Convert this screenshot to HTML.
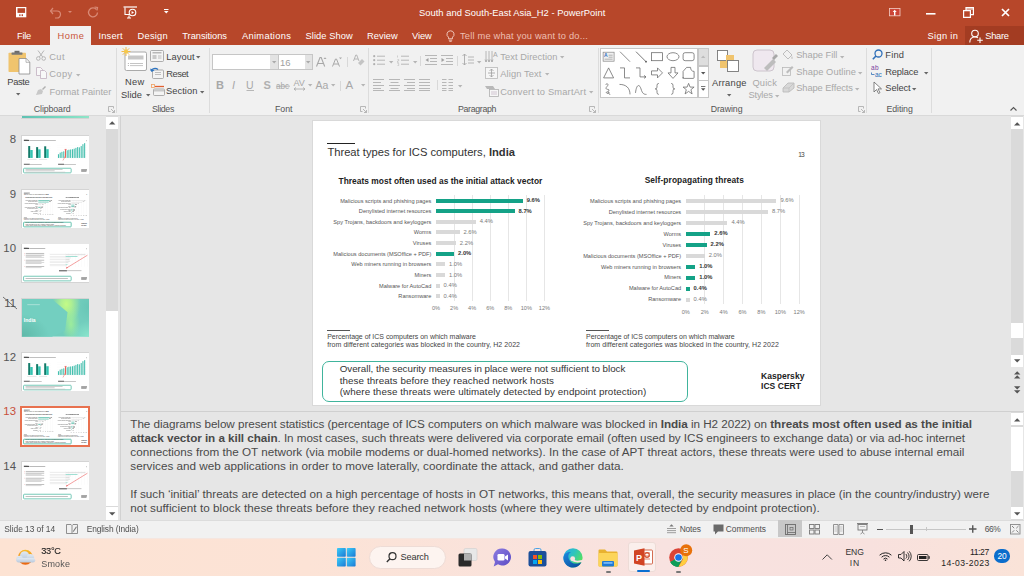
<!DOCTYPE html>
<html><head><meta charset="utf-8">
<style>
*{margin:0;padding:0;box-sizing:border-box}
html,body{width:1024px;height:576px;overflow:hidden;background:#e6e6e6;font-family:"Liberation Sans",sans-serif}
.a{position:absolute;white-space:nowrap}
svg.a{overflow:visible}
</style></head><body>
<div class="a" style="left:0px;top:0px;width:1024px;height:45px;background:#b7472a;"></div>
<svg class="a" style="left:15.8px;top:6.7px;" width="11" height="11" viewBox="0 0 11 11"><rect x="0" y="0" width="10.3" height="10.3" fill="#fff"/><rect x="1.5" y="1.2" width="7.6" height="4.7" fill="#b7472a"/><rect x="3.2" y="7.3" width="1.3" height="1.8" fill="#b7472a"/><rect x="5.6" y="7.3" width="1.4" height="1.8" fill="#b7472a"/></svg>
<svg class="a" style="left:49px;top:6px;" width="13" height="13" viewBox="0 0 13 13"><path d="M4 2 L1.5 5 L4 8" fill="none" stroke="#d98a76" stroke-width="1.2"/><path d="M1.8 5 H8 a3.5 3.5 0 0 1 0 7 H6" fill="none" stroke="#d98a76" stroke-width="1.2"/></svg>
<svg class="a" style="left:68px;top:10px;" width="5" height="4" viewBox="0 0 5 4"><path d="M0 1h4l-2 2z" fill="#d98a76"/></svg>
<svg class="a" style="left:87px;top:6px;" width="12" height="12" viewBox="0 0 12 12"><path d="M9.5 3.5 A4.5 4.5 0 1 0 10.5 6.5" fill="none" stroke="#d98a76" stroke-width="1.3"/><path d="M7.5 1 L10.5 1.5 L10 4.5" fill="none" stroke="#d98a76" stroke-width="1.2"/></svg>
<svg class="a" style="left:123px;top:6px;" width="15" height="13" viewBox="0 0 15 13"><path d="M0.5 1H14" stroke="#fff" stroke-width="1.2"/><path d="M2 1.5V8.5H7" fill="none" stroke="#fff" stroke-width="1.1"/><circle cx="9.5" cy="6.5" r="3.3" fill="none" stroke="#fff" stroke-width="1.1"/><path d="M8.6 4.9l2.4 1.6l-2.4 1.6z" fill="#fff"/><path d="M6 9.5v2M4 12h4" stroke="#fff" stroke-width="1.1"/></svg>
<svg class="a" style="left:164px;top:9px;" width="5" height="5" viewBox="0 0 5 5"><path d="M0 0.5h4.5" stroke="#fff" stroke-width="1"/><path d="M0 2h4.5l-2.25 2.5z" fill="#fff"/></svg>
<div class="a" style="left:419.00px;top:8.34px;font-size:9.4px;line-height:1;color:#fff;font-weight:normal;letter-spacing:0.019px;">South and South-East Asia_H2 - PowerPoint</div>
<svg class="a" style="left:889.4px;top:7.9px;" width="12" height="9" viewBox="0 0 12 9"><rect x="0.4" y="0.4" width="10.6" height="7.4" fill="#cc4436" stroke="#f2cfc8" stroke-width="0.8"/><path d="M5.7 1.7l2 2.2H6.4v3.5H5V3.9H3.7z" fill="#fff"/></svg>
<svg class="a" style="left:926px;top:13px;" width="10" height="2" viewBox="0 0 10 2"><rect width="9.5" height="1.6" fill="#fff"/></svg>
<svg class="a" style="left:963px;top:7px;" width="11" height="11" viewBox="0 0 11 11"><path d="M0.6 3.6h6.8v6.8H0.6z" fill="none" stroke="#fff" stroke-width="1.2"/><path d="M3 3.4V0.6h7.4v7H7.6" fill="none" stroke="#fff" stroke-width="1.2"/><path d="M3 2h7.4" stroke="#fff" stroke-width="1"/></svg>
<svg class="a" style="left:1001px;top:8px;" width="9" height="9" viewBox="0 0 9 9"><path d="M1 1L8 8M8 1L1 8" stroke="#fff" stroke-width="1.7"/></svg>
<div class="a" style="left:50px;top:26px;width:41px;height:20px;background:#f1f1f1;"></div>
<div class="a" style="left:16.90px;top:31.53px;font-size:9.3px;line-height:1;color:#fff;font-weight:normal;letter-spacing:-0.193px;">File</div>
<div class="a" style="left:98.40px;top:31.53px;font-size:9.3px;line-height:1;color:#fff;font-weight:normal;letter-spacing:0.210px;">Insert</div>
<div class="a" style="left:137.60px;top:31.53px;font-size:9.3px;line-height:1;color:#fff;font-weight:normal;letter-spacing:0.232px;">Design</div>
<div class="a" style="left:182.30px;top:31.53px;font-size:9.3px;line-height:1;color:#fff;font-weight:normal;letter-spacing:-0.042px;">Transitions</div>
<div class="a" style="left:242.00px;top:31.53px;font-size:9.3px;line-height:1;color:#fff;font-weight:normal;letter-spacing:0.312px;">Animations</div>
<div class="a" style="left:305.60px;top:31.53px;font-size:9.3px;line-height:1;color:#fff;font-weight:normal;letter-spacing:0.054px;">Slide Show</div>
<div class="a" style="left:367.00px;top:31.53px;font-size:9.3px;line-height:1;color:#fff;font-weight:normal;letter-spacing:0.063px;">Review</div>
<div class="a" style="left:412.00px;top:31.53px;font-size:9.3px;line-height:1;color:#fff;font-weight:normal;letter-spacing:-0.061px;">View</div>
<div class="a" style="left:57.40px;top:31.53px;font-size:9.3px;line-height:1;color:#c9543a;font-weight:normal;letter-spacing:0.600px;">Home</div>
<svg class="a" style="left:446px;top:30px;" width="9" height="12" viewBox="0 0 9 12"><path d="M4.5 0.8a3.5 3.5 0 0 0-2 6.4v1.6h4v-1.6a3.5 3.5 0 0 0-2-6.4z" fill="none" stroke="#f0c8bd" stroke-width="1"/><path d="M2.8 10.2h3.4M3.3 11.4h2.4" stroke="#f0c8bd" stroke-width="0.9"/></svg>
<div class="a" style="left:460.00px;top:31.53px;font-size:9.3px;line-height:1;color:#eebfb2;font-weight:normal;letter-spacing:0.184px;">Tell me what you want to do...</div>
<div class="a" style="left:927.60px;top:31.53px;font-size:9.3px;line-height:1;color:#fff;font-weight:normal;letter-spacing:0.296px;">Sign in</div>
<div class="a" style="left:965px;top:26px;width:59px;height:19px;background:#a33c22;"></div>
<svg class="a" style="left:968.5px;top:28.5px;" width="15" height="15" viewBox="0 0 15 15"><circle cx="6" cy="4.5" r="3.3" fill="none" stroke="#fff" stroke-width="1.1"/><path d="M0.8 13.5c0-3.5 2.3-5.5 5.2-5.5c1.2 0 2.2 0.3 3 0.9" fill="none" stroke="#fff" stroke-width="1.1"/><path d="M11 8.5v5.5M8.2 11.2h5.6" stroke="#fff" stroke-width="1.1"/></svg>
<div class="a" style="left:985.30px;top:31.53px;font-size:9.3px;line-height:1;color:#fff;font-weight:normal;letter-spacing:-0.277px;">Share</div>
<div class="a" style="left:0px;top:45px;width:1024px;height:70px;background:#f1f1f1;"></div>
<div class="a" style="left:0px;top:115px;width:1024px;height:1px;background:#d9d9d9;"></div>
<div class="a" style="left:116px;top:48px;width:1px;height:65px;background:#dcdcdc;"></div>
<div class="a" style="left:209px;top:48px;width:1px;height:65px;background:#dcdcdc;"></div>
<div class="a" style="left:368px;top:48px;width:1px;height:65px;background:#dcdcdc;"></div>
<div class="a" style="left:598px;top:48px;width:1px;height:65px;background:#dcdcdc;"></div>
<div class="a" style="left:866px;top:48px;width:1px;height:65px;background:#dcdcdc;"></div>
<div class="a" style="left:931px;top:48px;width:1px;height:65px;background:#dcdcdc;"></div>
<svg class="a" style="left:8px;top:50px;" width="24" height="25" viewBox="0 0 24 25"><rect x="0.5" y="2.8" width="17.5" height="19.2" rx="0.8" fill="#f0c46e"/><path d="M6.5 0.8h5v2.2h-5z" fill="#6a6a6a"/><rect x="3.5" y="2.5" width="11" height="2.2" rx="0.6" fill="#777"/><path d="M11 8.5h7.2l3.6 3.6v11.9h-10.8z" fill="#fff" stroke="#8a8a8a" stroke-width="0.8"/><path d="M18 8.5v3.8h3.8" fill="none" stroke="#8a8a8a" stroke-width="0.6"/></svg>
<div class="a" style="left:7.30px;top:77.53px;font-size:9.3px;line-height:1;color:#444444;font-weight:normal;letter-spacing:-0.343px;">Paste</div>
<svg class="a" style="left:15.5px;top:93px;" width="5" height="3" viewBox="0 0 5 3"><path d="M0 0h4.4l-2.2 2.6z" fill="#666"/></svg>
<svg class="a" style="left:36px;top:50px;" width="10" height="11" viewBox="0 0 10 11"><circle cx="2.3" cy="8.5" r="1.8" fill="none" stroke="#b0b0b0" stroke-width="0.9"/><circle cx="7.7" cy="8.5" r="1.8" fill="none" stroke="#b0b0b0" stroke-width="0.9"/><path d="M3.3 7L8 0.5M6.7 7L2 0.5" stroke="#b0b0b0" stroke-width="0.9"/></svg>
<div class="a" style="left:49.20px;top:52.93px;font-size:9.3px;line-height:1;color:#a8a8a8;font-weight:normal;letter-spacing:0.416px;">Cut</div>
<svg class="a" style="left:36px;top:67px;" width="11" height="12" viewBox="0 0 11 12"><path d="M0.5 0.5h4l2 2v6h-6z" fill="#f8f8f8" stroke="#c2b0c0" stroke-width="0.8"/><path d="M4.5 3.5h4l2 2v6h-6z" fill="#f8f8f8" stroke="#c2b0c0" stroke-width="0.8"/></svg>
<div class="a" style="left:49.20px;top:69.93px;font-size:9.3px;line-height:1;color:#a8a8a8;font-weight:normal;letter-spacing:0.432px;">Copy</div>
<svg class="a" style="left:76px;top:74px;" width="5" height="3" viewBox="0 0 5 3"><path d="M0 0h4.4l-2.2 2.6z" fill="#b5b5b5"/></svg>
<svg class="a" style="left:35px;top:85px;" width="12" height="11" viewBox="0 0 12 11"><path d="M7 4l3-3l1 1l-3 3z" fill="#b0b0b0"/><path d="M1 10l2-5l3-1l2 2l-1 3z" fill="#c8c8c8"/></svg>
<div class="a" style="left:49.50px;top:87.53px;font-size:9.3px;line-height:1;color:#a8a8a8;font-weight:normal;letter-spacing:0.024px;">Format Painter</div>
<div class="a" style="left:33.80px;top:104.75px;font-size:8.8px;line-height:1;color:#555;font-weight:normal;letter-spacing:-0.107px;">Clipboard</div>
<svg class="a" style="left:108px;top:106px;" width="7" height="7" viewBox="0 0 7 7"><path d="M0.5 0.5h5v2M0.5 0.5v5h2" fill="none" stroke="#a8a8a8" stroke-width="0.8"/><path d="M3 3l3.5 3.5M6.5 4v2.5H4" fill="none" stroke="#a8a8a8" stroke-width="0.8"/></svg>
<svg class="a" style="left:121px;top:46px;" width="27" height="26" viewBox="0 0 27 26"><rect x="4" y="6" width="21.5" height="18.5" rx="1.5" fill="#fff" stroke="#a0a0a0" stroke-width="0.9"/><rect x="7" y="9.5" width="15.5" height="4" fill="#c8c8c8"/><path d="M9 17.5h13M9 19.6h13" stroke="#bdbdbd" stroke-width="0.9"/><circle cx="7.3" cy="17.5" r="0.5" fill="#999"/><circle cx="7.3" cy="19.6" r="0.5" fill="#999"/><g stroke="#f2b43a" stroke-width="0.9"><path d="M5 1v9M0.5 5.5h9M1.8 2.3l6.4 6.4M8.2 2.3l-6.4 6.4"/></g><circle cx="5" cy="5.5" r="2" fill="#f6c94a"/></svg>
<div class="a" style="left:125.00px;top:78.13px;font-size:9.3px;line-height:1;color:#444444;font-weight:normal;letter-spacing:0.351px;">New</div>
<div class="a" style="left:121.00px;top:90.63px;font-size:9.3px;line-height:1;color:#444444;font-weight:normal;letter-spacing:0.082px;">Slide</div>
<svg class="a" style="left:146px;top:94px;" width="5" height="3" viewBox="0 0 5 3"><path d="M0 0h4.4l-2.2 2.6z" fill="#666"/></svg>
<svg class="a" style="left:150px;top:50px;" width="14" height="12" viewBox="0 0 14 12"><rect x="0.5" y="0.5" width="13" height="11" rx="1" fill="#f4f4f4" stroke="#9a9a9a" stroke-width="0.8"/><rect x="2.5" y="2" width="9" height="1.5" fill="#b8b8b8"/><rect x="2.5" y="5" width="4" height="4" fill="#c8c8c8"/><path d="M8 6h3.5M8 8h3.5" stroke="#b0b0b0" stroke-width="0.8"/></svg>
<div class="a" style="left:166.30px;top:52.93px;font-size:9.3px;line-height:1;color:#444444;font-weight:normal;letter-spacing:0.077px;">Layout</div>
<svg class="a" style="left:196px;top:56px;" width="5" height="3" viewBox="0 0 5 3"><path d="M0 0h4.4l-2.2 2.6z" fill="#666"/></svg>
<svg class="a" style="left:150px;top:67px;" width="14" height="12" viewBox="0 0 14 12"><rect x="2.5" y="3" width="11" height="8.5" rx="1" fill="#f4f4f4" stroke="#9a9a9a" stroke-width="0.8"/><path d="M5 5.5h6M5 7.5h6" stroke="#b0b0b0" stroke-width="0.8"/><path d="M1 4a4 3 0 0 1 7-1.5" fill="none" stroke="#2e74c0" stroke-width="1.3"/><path d="M0 1.5l1.5 3.5l3-1.5z" fill="#2e74c0"/></svg>
<div class="a" style="left:166.30px;top:69.93px;font-size:9.3px;line-height:1;color:#444444;font-weight:normal;letter-spacing:-0.472px;">Reset</div>
<svg class="a" style="left:151px;top:84px;" width="14" height="12" viewBox="0 0 14 12"><rect x="0.5" y="0.5" width="3" height="3" fill="none" stroke="#f0a060" stroke-width="0.8"/><path d="M4 2.5h9" stroke="#e06030" stroke-width="1.3"/><rect x="2.5" y="5" width="11" height="6.5" rx="1" fill="#f4f4f4" stroke="#9a9a9a" stroke-width="0.8"/><rect x="3" y="5.5" width="10" height="2" fill="#c8c8c8"/></svg>
<div class="a" style="left:166.00px;top:86.93px;font-size:9.3px;line-height:1;color:#444444;font-weight:normal;letter-spacing:0.048px;">Section</div>
<svg class="a" style="left:200px;top:91px;" width="5" height="3" viewBox="0 0 5 3"><path d="M0 0h4.4l-2.2 2.6z" fill="#666"/></svg>
<div class="a" style="left:152.00px;top:104.75px;font-size:8.8px;line-height:1;color:#555;font-weight:normal;letter-spacing:-0.332px;">Slides</div>
<div class="a" style="left:212px;top:53.5px;width:66px;height:16.5px;background:#fff;border:1px solid #c6c6c6"></div>
<div class="a" style="left:270px;top:54.5px;width:7.5px;height:14.5px;background:#e3e3e3;"></div>
<svg class="a" style="left:271.5px;top:61px;" width="5" height="3" viewBox="0 0 5 3"><path d="M0 0h4.4l-2.2 2.6z" fill="#aaa"/></svg>
<div class="a" style="left:278px;top:53.5px;width:35px;height:16.5px;background:#fff;border:1px solid #c6c6c6"></div>
<div class="a" style="left:304.5px;top:54.5px;width:7.5px;height:14.5px;background:#e3e3e3;"></div>
<svg class="a" style="left:306px;top:61px;" width="5" height="3" viewBox="0 0 5 3"><path d="M0 0h4.4l-2.2 2.6z" fill="#aaa"/></svg>
<div class="a" style="left:280.00px;top:58.26px;font-size:9.5px;line-height:1;color:#a0a0a0;font-weight:normal;">16</div>
<svg class="a" style="left:316px;top:56px;" width="11" height="11" viewBox="0 0 11 11"><path d="M0.5 10.5L4 1.5h1.2l3.5 9M2 7.5h5" fill="none" stroke="#a8a8a8" stroke-width="1.1"/><path d="M7.5 3l1.5-1.8l1.5 1.8z" fill="#a8a8a8"/></svg>
<svg class="a" style="left:332px;top:57px;" width="10" height="10" viewBox="0 0 10 10"><path d="M0.5 9.5L3.5 2h1l3 7.5M1.8 7h4.5" fill="none" stroke="#a8a8a8" stroke-width="1"/><path d="M7 0.5h3l-1.5 1.8z" fill="#a8a8a8"/></svg>
<div class="a" style="left:347px;top:57px;width:1px;height:10px;background:#d8d8d8;"></div>
<svg class="a" style="left:353px;top:54px;" width="12" height="12" viewBox="0 0 12 12"><path d="M0.5 7L2.8 1h0.9l2.3 6M1.3 5h3.7" fill="none" stroke="#b0b0b0" stroke-width="0.9"/><path d="M5 9l4-4l2.5 2.5l-4 4z" fill="#c4c4c4"/></svg>
<svg class="a" style="left:215px;top:78.5px;" width="60" height="12" viewBox="0 0 60 12"><text x="1" y="10" font-family="Liberation Sans" font-weight="bold" font-size="11" fill="#a8a8a8">B</text><text x="17" y="10" font-family="Liberation Sans" font-style="italic" font-size="11" fill="#a8a8a8">I</text><text x="31" y="9.5" font-family="Liberation Sans" font-size="10.5" fill="#a8a8a8">U</text><path d="M31.5 11.5h7.5" stroke="#a8a8a8" stroke-width="0.8"/><text x="48.5" y="10" font-family="Liberation Sans" font-weight="bold" font-size="11" fill="#b0b0b0">S</text></svg>
<svg class="a" style="left:276px;top:80.5px;" width="16" height="10" viewBox="0 0 16 10"><text x="0" y="8" font-family="Liberation Sans" font-size="8.2" fill="#a8a8a8">abc</text><path d="M0 5.2h14" stroke="#a8a8a8" stroke-width="0.8"/></svg>
<svg class="a" style="left:293px;top:77.5px;" width="14" height="14" viewBox="0 0 14 14"><text x="0.5" y="8" font-family="Liberation Sans" font-size="9" fill="#a8a8a8">AV</text><path d="M1 11h11M1 11l2-1.5M1 11l2 1.5M12 11l-2-1.5M12 11l-2 1.5" stroke="#a8a8a8" stroke-width="0.8" fill="none"/></svg>
<svg class="a" style="left:308px;top:83.5px;" width="5" height="3" viewBox="0 0 5 3"><path d="M0 0h4.4l-2.2 2.6z" fill="#b5b5b5"/></svg>
<div class="a" style="left:315.50px;top:79.91px;font-size:10.5px;line-height:1;color:#a8a8a8;font-weight:normal;">Aa</div>
<svg class="a" style="left:331px;top:83.5px;" width="5" height="3" viewBox="0 0 5 3"><path d="M0 0h4.4l-2.2 2.6z" fill="#b5b5b5"/></svg>
<div class="a" style="left:340px;top:80.5px;width:1px;height:10px;background:#d8d8d8;"></div>
<div class="a" style="left:345.50px;top:80.07px;font-size:11.5px;line-height:1;color:#a8a8a8;font-weight:normal;">A</div>
<svg class="a" style="left:361px;top:83.5px;" width="5" height="3" viewBox="0 0 5 3"><path d="M0 0h4.4l-2.2 2.6z" fill="#b5b5b5"/></svg>
<div class="a" style="left:275.00px;top:104.75px;font-size:8.8px;line-height:1;color:#555;font-weight:normal;letter-spacing:-0.067px;">Font</div>
<svg class="a" style="left:360px;top:106px;" width="7" height="7" viewBox="0 0 7 7"><path d="M0.5 0.5h5v2M0.5 0.5v5h2" fill="none" stroke="#a8a8a8" stroke-width="0.8"/><path d="M3 3l3.5 3.5M6.5 4v2.5H4" fill="none" stroke="#a8a8a8" stroke-width="0.8"/></svg>
<svg class="a" style="left:373px;top:55px;" width="13" height="11" viewBox="0 0 13 11"><circle cx="1.2" cy="1.2" r="1.1" fill="#b0b0b0"/><circle cx="1.2" cy="5.2" r="1.1" fill="#b0b0b0"/><circle cx="1.2" cy="9.2" r="1.1" fill="#b0b0b0"/><path d="M4 1.2h8M4 5.2h8M4 9.2h8" stroke="#b0b0b0" stroke-width="0.9"/></svg>
<svg class="a" style="left:389px;top:61px;" width="5" height="3" viewBox="0 0 5 3"><path d="M0 0h4.4l-2.2 2.6z" fill="#b5b5b5"/></svg>
<svg class="a" style="left:397px;top:55px;" width="13" height="11" viewBox="0 0 13 11"><path d="M0.5 0.5v2M0.5 4.5h1.2v1.5h-1.2v1.5h1.2M0.5 8.5h1.2v2h-1.2" stroke="#b8b8b8" stroke-width="0.6" fill="none"/><path d="M4 1.2h8M4 5.2h8M4 9.2h8" stroke="#b0b0b0" stroke-width="0.9"/></svg>
<svg class="a" style="left:413px;top:61px;" width="5" height="3" viewBox="0 0 5 3"><path d="M0 0h4.4l-2.2 2.6z" fill="#b5b5b5"/></svg>
<div class="a" style="left:420px;top:56px;width:1px;height:10px;background:#d8d8d8;"></div>
<svg class="a" style="left:425px;top:55px;" width="12" height="11" viewBox="0 0 12 11"><path d="M0 0.5h12M5 3.5h7M5 6.5h7M0 9.5h12" stroke="#b0b0b0" stroke-width="0.9"/><path d="M3.5 3l-3 2l3 2z" fill="#a0a0a0"/></svg>
<svg class="a" style="left:441px;top:55px;" width="12" height="11" viewBox="0 0 12 11"><path d="M0 0.5h12M5 3.5h7M5 6.5h7M0 9.5h12" stroke="#b0b0b0" stroke-width="0.9"/><path d="M0.5 3l3 2l-3 2z" fill="#a0a0a0"/></svg>
<div class="a" style="left:457px;top:56px;width:1px;height:10px;background:#d8d8d8;"></div>
<svg class="a" style="left:462px;top:53px;" width="12" height="14" viewBox="0 0 12 14"><path d="M2.5 1v11M0.5 3l2-2l2 2M0.5 10l2 2l2-2" fill="none" stroke="#a8a8a8" stroke-width="0.9"/><path d="M6 4h6M6 7h6M6 10h6" stroke="#b0b0b0" stroke-width="0.9"/></svg>
<svg class="a" style="left:477px;top:61px;" width="5" height="3" viewBox="0 0 5 3"><path d="M0 0h4.4l-2.2 2.6z" fill="#b5b5b5"/></svg>
<svg class="a" style="left:373px;top:79px;" width="11" height="12" viewBox="0 0 11 12"><path d="M0 0.5h11M0 3.5h8M0 6.5h11M0 9.5h8M0 11.5h11" stroke="#b0b0b0" stroke-width="0.9"/></svg>
<svg class="a" style="left:389px;top:79px;" width="11" height="12" viewBox="0 0 11 12"><path d="M0 0.5h11M1.5 3.5h8M0 6.5h11M1.5 9.5h8M0 11.5h11" stroke="#b0b0b0" stroke-width="0.9"/></svg>
<svg class="a" style="left:404px;top:79px;" width="11" height="12" viewBox="0 0 11 12"><path d="M0 0.5h11M3 3.5h8M0 6.5h11M3 9.5h8M0 11.5h11" stroke="#b0b0b0" stroke-width="0.9"/></svg>
<svg class="a" style="left:419px;top:79px;" width="11" height="12" viewBox="0 0 11 12"><path d="M0 0.5h11M0 3.5h11M0 6.5h11M0 9.5h11M0 11.5h11" stroke="#b0b0b0" stroke-width="0.9"/></svg>
<div class="a" style="left:437px;top:80px;width:1px;height:10px;background:#d8d8d8;"></div>
<svg class="a" style="left:442px;top:79px;" width="11" height="12" viewBox="0 0 11 12"><path d="M0 0.5h4.5M0 3.5h4.5M0 6.5h4.5M0 9.5h4.5M0 11.5h4.5M6.5 0.5h4.5M6.5 3.5h4.5M6.5 6.5h4.5M6.5 9.5h4.5M6.5 11.5h4.5" stroke="#b0b0b0" stroke-width="0.9"/></svg>
<svg class="a" style="left:458px;top:85px;" width="5" height="3" viewBox="0 0 5 3"><path d="M0 0h4.4l-2.2 2.6z" fill="#b5b5b5"/></svg>
<svg class="a" style="left:485px;top:50px;" width="14" height="13" viewBox="0 0 14 13"><path d="M1 1v11M4 1v11M7 1v11" stroke="#b0b0b0" stroke-width="0.9"/><path d="M0 9.5l1 2.5l1-2.5M3 9.5l1 2.5l1-2.5M6 9.5l1 2.5l1-2.5" fill="none" stroke="#a0a0a0" stroke-width="0.7"/><text x="8" y="7" font-family="Liberation Sans" font-size="7" fill="#a8a8a8">A</text></svg>
<div class="a" style="left:500.20px;top:52.93px;font-size:9.3px;line-height:1;color:#a8a8a8;font-weight:normal;letter-spacing:0.076px;">Text Direction</div>
<svg class="a" style="left:560px;top:56px;" width="5" height="3" viewBox="0 0 5 3"><path d="M0 0h4.4l-2.2 2.6z" fill="#b5b5b5"/></svg>
<svg class="a" style="left:485px;top:67px;" width="14" height="13" viewBox="0 0 14 13"><rect x="0.5" y="0.5" width="12" height="11" fill="#f6f6f6" stroke="#b8b8b8" stroke-width="0.8"/><path d="M6.5 2v8M4.5 4l2-2l2 2M4.5 8l2 2l2-2M3 6h7" fill="none" stroke="#a0a0a0" stroke-width="0.8"/></svg>
<div class="a" style="left:500.20px;top:69.93px;font-size:9.3px;line-height:1;color:#a8a8a8;font-weight:normal;letter-spacing:0.122px;">Align Text</div>
<svg class="a" style="left:545px;top:73px;" width="5" height="3" viewBox="0 0 5 3"><path d="M0 0h4.4l-2.2 2.6z" fill="#b5b5b5"/></svg>
<svg class="a" style="left:485px;top:85px;" width="14" height="12" viewBox="0 0 14 12"><path d="M0 1h8l2 3H2z" fill="#b8b8b8"/><rect x="4.5" y="4.5" width="9" height="7" fill="#f6f6f6" stroke="#b0b0b0" stroke-width="0.8"/><path d="M6 7h6M6 9h6" stroke="#c0b0c0" stroke-width="0.7"/></svg>
<div class="a" style="left:500.20px;top:87.73px;font-size:9.3px;line-height:1;color:#a8a8a8;font-weight:normal;letter-spacing:0.203px;">Convert to SmartArt</div>
<svg class="a" style="left:589px;top:91px;" width="5" height="3" viewBox="0 0 5 3"><path d="M0 0h4.4l-2.2 2.6z" fill="#b5b5b5"/></svg>
<div class="a" style="left:458.00px;top:104.75px;font-size:8.8px;line-height:1;color:#555;font-weight:normal;letter-spacing:-0.323px;">Paragraph</div>
<svg class="a" style="left:589px;top:106px;" width="7" height="7" viewBox="0 0 7 7"><path d="M0.5 0.5h5v2M0.5 0.5v5h2" fill="none" stroke="#a8a8a8" stroke-width="0.8"/><path d="M3 3l3.5 3.5M6.5 4v2.5H4" fill="none" stroke="#a8a8a8" stroke-width="0.8"/></svg>
<div class="a" style="left:600px;top:48px;width:98px;height:50px;background:#fff;border:1px solid #c6c6c6"></div>
<div class="a" style="left:698px;top:48px;width:11px;height:18px;background:#dedede;border:1px solid #c6c6c6"></div>
<div class="a" style="left:698px;top:65.5px;width:11px;height:15px;background:#fff;border:1px solid #c6c6c6"></div>
<div class="a" style="left:698px;top:80px;width:11px;height:18px;background:#fff;border:1px solid #c6c6c6"></div>
<svg class="a" style="left:701px;top:55px;" width="5" height="4" viewBox="0 0 5 4"><path d="M0 3h4.4l-2.2-2.6z" fill="#bbb"/></svg>
<svg class="a" style="left:701px;top:72px;" width="5" height="3" viewBox="0 0 5 3"><path d="M0 0h4.4l-2.2 2.6z" fill="#555"/></svg>
<svg class="a" style="left:701px;top:86px;" width="5" height="6" viewBox="0 0 5 6"><path d="M0 0.5h4.4" stroke="#555" stroke-width="0.8"/><path d="M0 2.2h4.4l-2.2 2.6z" fill="#555"/></svg>
<svg class="a" style="left:600px;top:48px;" width="98" height="50" viewBox="0 0 98 50"><g transform="translate(8.600000000000023,8.700000000000003)"><rect x="-5.5" y="-4.5" width="11" height="9" fill="#f0f0f0" stroke="#888" stroke-width="0.7"/><text x="-4.5" y="0.5" font-family="Liberation Sans" font-weight="bold" font-size="5" fill="#2e6fc0">A</text><path d="M-4 2.5h8M0 -1.5h4M0 0.5h4" stroke="#888" stroke-width="0.6"/></g><g transform="translate(25,8.700000000000003)"><path d="M-5 -5L5 5" stroke="#666" stroke-width="0.75"/></g><g transform="translate(41,8.700000000000003)"><path d="M-5 -5L5 5" stroke="#555" stroke-width="0.8"/><circle cx="5" cy="5" r="0.9" fill="#555"/></g><g transform="translate(57,8.700000000000003)"><rect x="-5.5" y="-4" width="11" height="8" fill="none" stroke="#666" stroke-width="0.75"/></g><g transform="translate(73,8.700000000000003)"><ellipse cx="0" cy="0" rx="6" ry="4" fill="none" stroke="#666" stroke-width="0.75"/></g><g transform="translate(88.60000000000002,8.700000000000003)"><rect x="-5.5" y="-4" width="11" height="8" rx="2" fill="none" stroke="#666" stroke-width="0.75"/></g><g transform="translate(8.600000000000023,24.900000000000006)"><path d="M-5 5L0 -5L5 5z" fill="none" stroke="#666" stroke-width="0.75"/></g><g transform="translate(25,24.900000000000006)"><path d="M-5 -5H-0.5V5H5" fill="none" stroke="#666" stroke-width="0.75"/></g><g transform="translate(41,24.900000000000006)"><path d="M-5 -5H-1V4H5M3 2.5l2 1.5l-2 1.5" fill="none" stroke="#666" stroke-width="0.75"/></g><g transform="translate(57,24.900000000000006)"><path d="M-5.5 -2H0.5V-5L5.5 0L0.5 5V2H-5.5z" fill="none" stroke="#666" stroke-width="0.75"/></g><g transform="translate(73,24.900000000000006)"><path d="M-2 -5.5H2V0H5L0 5.5L-5 0H-2z" fill="none" stroke="#666" stroke-width="0.75"/></g><g transform="translate(88.60000000000002,24.900000000000006)"><path d="M-5.5 5.5V-1.5L-2 -5.5H2C2 -3 3.2 -1.5 5.5 -1.5V4.5Q5.5 5.5 4.5 5.5H-4.5Q-5.5 5.5 -5.5 4.5z" fill="none" stroke="#666" stroke-width="0.75"/></g><g transform="translate(8.600000000000023,40.900000000000006)"><path d="M-3 -4C-1.5 -6.5 0.5 -4.5 -1.5 -2.5C-3.5 -0.5 -2.5 0.5 -0.5 0.5C1.5 0.8 0 3 -1.5 3C-3 3 -2 5 -0.5 4.5C1 4 0.5 2.5 -0.5 3.5L1.5 6" fill="none" stroke="#666" stroke-width="0.75"/></g><g transform="translate(25,40.900000000000006)"><path d="M-5.5 -4.5C1 -4.5 5 -1 5 5.5" fill="none" stroke="#666" stroke-width="0.75"/></g><g transform="translate(41,40.900000000000006)"><path d="M-5.5 4C-4.5 -5 -1.5 -5 0 0C1.5 5 3 5.5 5.5 5.5" fill="none" stroke="#666" stroke-width="0.75"/></g><g transform="translate(57,40.900000000000006)"><path d="M1.8 -5.5Q0 -5.5 0 -3.5V-1.8Q0 0 -1.8 0Q0 0 0 1.8V3.5Q0 5.5 1.8 5.5" fill="none" stroke="#666" stroke-width="0.75"/></g><g transform="translate(73,40.900000000000006)"><path d="M-1.8 -5.5Q0 -5.5 0 -3.5V-1.8Q0 0 1.8 0Q0 0 0 1.8V3.5Q0 5.5 -1.8 5.5" fill="none" stroke="#666" stroke-width="0.75"/></g><g transform="translate(88.60000000000002,40.900000000000006)"><path d="M0 -5.5L1.5 -1.8L5.5 -1.8L2.3 0.8L3.5 5L0 2.5L-3.5 5L-2.3 0.8L-5.5 -1.8L-1.5 -1.8z" fill="none" stroke="#666" stroke-width="0.75"/></g></svg>
<svg class="a" style="left:716px;top:49px;" width="26" height="24" viewBox="0 0 26 24"><rect x="1.5" y="1.5" width="10" height="10" fill="#fff" stroke="#777" stroke-width="0.9"/><rect x="10" y="6" width="8" height="6" fill="#f0c46e"/><rect x="4" y="12" width="8" height="7" fill="#f0c46e"/><rect x="11.5" y="11.5" width="11" height="11" fill="#fff" stroke="#777" stroke-width="0.9"/></svg>
<div class="a" style="left:712.00px;top:79.23px;font-size:9.3px;line-height:1;color:#444444;font-weight:normal;letter-spacing:0.238px;">Arrange</div>
<svg class="a" style="left:726.5px;top:94px;" width="5" height="3" viewBox="0 0 5 3"><path d="M0 0h4.4l-2.2 2.6z" fill="#666"/></svg>
<svg class="a" style="left:752px;top:49px;" width="27" height="26" viewBox="0 0 27 26"><rect x="1" y="1" width="21" height="21" rx="4" fill="#efe8ef" stroke="#c8c0c8" stroke-width="0.9"/><path d="M12 19l9-9l3 3l-9 9z" fill="#bdbdbd"/><path d="M24 5l2 2l-4 4l-2-2z" fill="#a8a8a8"/></svg>
<div class="a" style="left:752.50px;top:78.93px;font-size:9.3px;line-height:1;color:#a8a8a8;font-weight:normal;letter-spacing:0.134px;">Quick</div>
<div class="a" style="left:748.60px;top:91.33px;font-size:9.3px;line-height:1;color:#a8a8a8;font-weight:normal;letter-spacing:-0.223px;">Styles</div>
<svg class="a" style="left:775px;top:95px;" width="5" height="3" viewBox="0 0 5 3"><path d="M0 0h4.4l-2.2 2.6z" fill="#b5b5b5"/></svg>
<svg class="a" style="left:782px;top:48.5px;" width="12" height="11" viewBox="0 0 12 11"><path d="M1 5l4-4l5 5l-4 4z" fill="none" stroke="#b8b8b8" stroke-width="0.9"/><path d="M10 7c1 1.5 1 3 0 3c-1 0 -1 -1.5 0 -3z" fill="#c8c8c8"/></svg>
<div class="a" style="left:796.20px;top:51.23px;font-size:9.3px;line-height:1;color:#a8a8a8;font-weight:normal;letter-spacing:-0.027px;">Shape Fill</div>
<svg class="a" style="left:840px;top:55.5px;" width="5" height="3" viewBox="0 0 5 3"><path d="M0 0h4.4l-2.2 2.6z" fill="#b5b5b5"/></svg>
<svg class="a" style="left:782px;top:65px;" width="12" height="11" viewBox="0 0 12 11"><rect x="0.5" y="2.5" width="8" height="8" fill="none" stroke="#b8b8b8" stroke-width="0.8"/><path d="M4 7l6-6l1.5 1.5l-6 6z" fill="#bdbdbd"/></svg>
<div class="a" style="left:796.20px;top:67.73px;font-size:9.3px;line-height:1;color:#a8a8a8;font-weight:normal;letter-spacing:0.073px;">Shape Outline</div>
<svg class="a" style="left:858px;top:72px;" width="5" height="3" viewBox="0 0 5 3"><path d="M0 0h4.4l-2.2 2.6z" fill="#b5b5b5"/></svg>
<svg class="a" style="left:782px;top:81.5px;" width="13" height="11" viewBox="0 0 13 11"><path d="M1 6l5-5h6v5l-5 4H1z" fill="#d8d8d8" stroke="#b8b8b8" stroke-width="0.8"/><path d="M1 6h6l5-5M7 6v4" fill="none" stroke="#c0c0c0" stroke-width="0.8"/></svg>
<div class="a" style="left:796.20px;top:84.13px;font-size:9.3px;line-height:1;color:#a8a8a8;font-weight:normal;letter-spacing:-0.076px;">Shape Effects</div>
<svg class="a" style="left:855px;top:88px;" width="5" height="3" viewBox="0 0 5 3"><path d="M0 0h4.4l-2.2 2.6z" fill="#b5b5b5"/></svg>
<div class="a" style="left:710.70px;top:104.75px;font-size:8.8px;line-height:1;color:#555;font-weight:normal;letter-spacing:-0.061px;">Drawing</div>
<svg class="a" style="left:858px;top:106px;" width="7" height="7" viewBox="0 0 7 7"><path d="M0.5 0.5h5v2M0.5 0.5v5h2" fill="none" stroke="#a8a8a8" stroke-width="0.8"/><path d="M3 3l3.5 3.5M6.5 4v2.5H4" fill="none" stroke="#a8a8a8" stroke-width="0.8"/></svg>
<svg class="a" style="left:872px;top:48.5px;" width="11" height="11" viewBox="0 0 11 11"><circle cx="6.5" cy="4.5" r="3.5" fill="none" stroke="#2e6fb8" stroke-width="1.3"/><path d="M4 7L0.8 10.2" stroke="#2e6fb8" stroke-width="1.6"/></svg>
<div class="a" style="left:885.30px;top:51.23px;font-size:9.3px;line-height:1;color:#444444;font-weight:normal;letter-spacing:0.205px;">Find</div>
<svg class="a" style="left:871px;top:64px;" width="14" height="14" viewBox="0 0 14 14"><text x="0" y="6" font-family="Liberation Sans" font-size="6.5" fill="#7a3ea0">a</text><text x="4" y="6" font-family="Liberation Sans" font-size="6.5" fill="#7a3ea0">b</text><text x="4" y="12.5" font-family="Liberation Sans" font-size="6.5" fill="#2e6fb8">ac</text><path d="M0.5 8.5v2h3" fill="none" stroke="#2e6fb8" stroke-width="0.8"/></svg>
<div class="a" style="left:885.30px;top:67.73px;font-size:9.3px;line-height:1;color:#444444;font-weight:normal;letter-spacing:-0.185px;">Replace</div>
<svg class="a" style="left:924px;top:72px;" width="5" height="3" viewBox="0 0 5 3"><path d="M0 0h4.4l-2.2 2.6z" fill="#666"/></svg>
<svg class="a" style="left:873px;top:80.5px;" width="10" height="13" viewBox="0 0 10 13"><path d="M1 1v10l2.5-2.5l2 4l1.5-0.8l-2-3.8h3.5z" fill="#fff" stroke="#666" stroke-width="0.8"/></svg>
<div class="a" style="left:885.30px;top:84.13px;font-size:9.3px;line-height:1;color:#444444;font-weight:normal;letter-spacing:-0.108px;">Select</div>
<svg class="a" style="left:912px;top:88px;" width="5" height="3" viewBox="0 0 5 3"><path d="M0 0h4.4l-2.2 2.6z" fill="#666"/></svg>
<div class="a" style="left:886.50px;top:104.75px;font-size:8.8px;line-height:1;color:#555;font-weight:normal;letter-spacing:-0.100px;">Editing</div>
<svg class="a" style="left:1010px;top:106px;" width="7" height="5" viewBox="0 0 7 5"><path d="M0.5 4.5l3-3l3 3" fill="none" stroke="#555" stroke-width="1.1"/></svg>
<div class="a" style="left:0px;top:116px;width:1024px;height:404px;background:#e6e6e6;"></div>
<div class="a" style="left:312px;top:120px;width:509px;height:286px;background:#d9d9d9;"></div>
<div class="a" style="left:313px;top:121px;width:507px;height:284px;overflow:hidden"><div style="position:absolute;left:0;top:-1px;width:507px;height:285px"><div class="a" style="left:0px;top:0px;width:507px;height:285px;background:#fff;"></div><div class="a" style="left:14px;top:22.6px;width:28px;height:1.3px;background:#222;"></div><div class="a" style="left:14.40px;top:26.62px;font-size:11.2px;line-height:1;color:#333;font-weight:normal;letter-spacing:-0.005px;">Threat types for ICS computers, <b>India</b></div><div class="a" style="left:485.30px;top:32.01px;font-size:6.6px;line-height:1;color:#444;font-weight:normal;letter-spacing:-0.934px;">13</div><div class="a" style="left:-177.00px;width:600px;text-align:center;top:186.16px;font-size:5.6px;line-height:1;color:#7a7a7a;font-weight:normal;">0%</div><div class="a" style="left:140.7px;top:74.5px;width:0.6px;height:106.1px;background:#e6e6e6;"></div><div class="a" style="left:-158.94px;width:600px;text-align:center;top:186.16px;font-size:5.6px;line-height:1;color:#7a7a7a;font-weight:normal;">2%</div><div class="a" style="left:158.7px;top:74.5px;width:0.6px;height:106.1px;background:#e6e6e6;"></div><div class="a" style="left:-140.88px;width:600px;text-align:center;top:186.16px;font-size:5.6px;line-height:1;color:#7a7a7a;font-weight:normal;">4%</div><div class="a" style="left:176.7px;top:74.5px;width:0.6px;height:106.1px;background:#e6e6e6;"></div><div class="a" style="left:-122.82px;width:600px;text-align:center;top:186.16px;font-size:5.6px;line-height:1;color:#7a7a7a;font-weight:normal;">6%</div><div class="a" style="left:194.7px;top:74.5px;width:0.6px;height:106.1px;background:#e6e6e6;"></div><div class="a" style="left:-104.76px;width:600px;text-align:center;top:186.16px;font-size:5.6px;line-height:1;color:#7a7a7a;font-weight:normal;">8%</div><div class="a" style="left:213.2px;top:74.5px;width:0.6px;height:106.1px;background:#e6e6e6;"></div><div class="a" style="left:-86.70px;width:600px;text-align:center;top:186.16px;font-size:5.6px;line-height:1;color:#7a7a7a;font-weight:normal;">10%</div><div class="a" style="left:231.2px;top:74.5px;width:0.6px;height:106.1px;background:#e6e6e6;"></div><div class="a" style="left:-68.64px;width:600px;text-align:center;top:186.16px;font-size:5.6px;line-height:1;color:#7a7a7a;font-weight:normal;">12%</div><div class="a" style="left:-481.70px;width:600px;text-align:right;top:78.56px;font-size:5.6px;line-height:1;color:#555;font-weight:normal;">Malicious scripts and phishing pages</div><div class="a" style="left:123px;top:78.6px;width:86.5px;height:4px;background:#14a287;"></div><div class="a" style="left:213.69px;top:78.19px;font-size:5.8px;line-height:1;color:#333;font-weight:bold;">9.6%</div><div class="a" style="left:-481.70px;width:600px;text-align:right;top:89.19px;font-size:5.6px;line-height:1;color:#555;font-weight:normal;">Denylisted internet resources</div><div class="a" style="left:123px;top:89.22999999999999px;width:78.5px;height:4px;background:#14a287;"></div><div class="a" style="left:205.56px;top:88.82px;font-size:5.8px;line-height:1;color:#333;font-weight:bold;">8.7%</div><div class="a" style="left:-481.70px;width:600px;text-align:right;top:99.82px;font-size:5.6px;line-height:1;color:#555;font-weight:normal;">Spy Trojans, backdoors and keyloggers</div><div class="a" style="left:123px;top:99.86px;width:39.5px;height:4px;background:#d9d9d9;"></div><div class="a" style="left:166.73px;top:99.45px;font-size:5.8px;line-height:1;color:#7a7a7a;font-weight:normal;">4.4%</div><div class="a" style="left:-481.70px;width:600px;text-align:right;top:110.45px;font-size:5.6px;line-height:1;color:#555;font-weight:normal;">Worms</div><div class="a" style="left:123px;top:110.49px;width:23.5px;height:4px;background:#d9d9d9;"></div><div class="a" style="left:150.48px;top:110.08px;font-size:5.8px;line-height:1;color:#7a7a7a;font-weight:normal;">2.6%</div><div class="a" style="left:-481.70px;width:600px;text-align:right;top:121.08px;font-size:5.6px;line-height:1;color:#555;font-weight:normal;">Viruses</div><div class="a" style="left:123px;top:121.12px;width:20.0px;height:4px;background:#d9d9d9;"></div><div class="a" style="left:146.87px;top:120.71px;font-size:5.8px;line-height:1;color:#7a7a7a;font-weight:normal;">2.2%</div><div class="a" style="left:-481.70px;width:600px;text-align:right;top:131.71px;font-size:5.6px;line-height:1;color:#555;font-weight:normal;">Malicious documents (MSOffice + PDF)</div><div class="a" style="left:123px;top:131.75px;width:18.0px;height:4px;background:#14a287;"></div><div class="a" style="left:145.06px;top:131.34px;font-size:5.8px;line-height:1;color:#333;font-weight:bold;">2.0%</div><div class="a" style="left:-481.70px;width:600px;text-align:right;top:142.34px;font-size:5.6px;line-height:1;color:#555;font-weight:normal;">Web miners running in browsers</div><div class="a" style="left:123px;top:142.38px;width:9.0px;height:4px;background:#d9d9d9;"></div><div class="a" style="left:136.03px;top:141.97px;font-size:5.8px;line-height:1;color:#7a7a7a;font-weight:normal;">1.0%</div><div class="a" style="left:-481.70px;width:600px;text-align:right;top:152.97px;font-size:5.6px;line-height:1;color:#555;font-weight:normal;">Miners</div><div class="a" style="left:123px;top:153.01px;width:9.0px;height:4px;background:#d9d9d9;"></div><div class="a" style="left:136.03px;top:152.60px;font-size:5.8px;line-height:1;color:#7a7a7a;font-weight:normal;">1.0%</div><div class="a" style="left:-481.70px;width:600px;text-align:right;top:163.60px;font-size:5.6px;line-height:1;color:#555;font-weight:normal;">Malware for AutoCad</div><div class="a" style="left:123px;top:163.64px;width:3.5px;height:4px;background:#d9d9d9;"></div><div class="a" style="left:130.61px;top:163.23px;font-size:5.8px;line-height:1;color:#7a7a7a;font-weight:normal;">0.4%</div><div class="a" style="left:-481.70px;width:600px;text-align:right;top:174.23px;font-size:5.6px;line-height:1;color:#555;font-weight:normal;">Ransomware</div><div class="a" style="left:123px;top:174.26999999999998px;width:3.5px;height:4px;background:#d9d9d9;"></div><div class="a" style="left:130.61px;top:173.86px;font-size:5.8px;line-height:1;color:#7a7a7a;font-weight:normal;">0.4%</div><div class="a" style="left:25.50px;top:56.89px;font-size:8.4px;line-height:1;color:#222;font-weight:bold;letter-spacing:0.036px;">Threats most often used as the initial attack vector</div><div class="a" style="left:72.80px;width:600px;text-align:center;top:189.66px;font-size:5.6px;line-height:1;color:#7a7a7a;font-weight:normal;">0%</div><div class="a" style="left:391.2px;top:74.5px;width:0.6px;height:109.5px;background:#e6e6e6;"></div><div class="a" style="left:91.70px;width:600px;text-align:center;top:189.66px;font-size:5.6px;line-height:1;color:#7a7a7a;font-weight:normal;">2%</div><div class="a" style="left:410.2px;top:74.5px;width:0.6px;height:109.5px;background:#e6e6e6;"></div><div class="a" style="left:110.60px;width:600px;text-align:center;top:189.66px;font-size:5.6px;line-height:1;color:#7a7a7a;font-weight:normal;">4%</div><div class="a" style="left:429.2px;top:74.5px;width:0.6px;height:109.5px;background:#e6e6e6;"></div><div class="a" style="left:129.50px;width:600px;text-align:center;top:189.66px;font-size:5.6px;line-height:1;color:#7a7a7a;font-weight:normal;">6%</div><div class="a" style="left:448.2px;top:74.5px;width:0.6px;height:109.5px;background:#e6e6e6;"></div><div class="a" style="left:148.40px;width:600px;text-align:center;top:189.66px;font-size:5.6px;line-height:1;color:#7a7a7a;font-weight:normal;">8%</div><div class="a" style="left:467.2px;top:74.5px;width:0.6px;height:109.5px;background:#e6e6e6;"></div><div class="a" style="left:167.30px;width:600px;text-align:center;top:189.66px;font-size:5.6px;line-height:1;color:#7a7a7a;font-weight:normal;">10%</div><div class="a" style="left:485.7px;top:74.5px;width:0.6px;height:109.5px;background:#e6e6e6;"></div><div class="a" style="left:186.20px;width:600px;text-align:center;top:189.66px;font-size:5.6px;line-height:1;color:#7a7a7a;font-weight:normal;">12%</div><div class="a" style="left:-231.90px;width:600px;text-align:right;top:78.56px;font-size:5.6px;line-height:1;color:#555;font-weight:normal;">Malicious scripts and phishing pages</div><div class="a" style="left:372.8px;top:78.6px;width:90.5px;height:4px;background:#d9d9d9;"></div><div class="a" style="left:467.52px;top:78.19px;font-size:5.8px;line-height:1;color:#7a7a7a;font-weight:normal;">9.6%</div><div class="a" style="left:-231.90px;width:600px;text-align:right;top:89.55px;font-size:5.6px;line-height:1;color:#555;font-weight:normal;">Denylisted internet resources</div><div class="a" style="left:372.8px;top:89.58999999999999px;width:82.0px;height:4px;background:#d9d9d9;"></div><div class="a" style="left:459.01px;top:89.18px;font-size:5.8px;line-height:1;color:#7a7a7a;font-weight:normal;">8.7%</div><div class="a" style="left:-231.90px;width:600px;text-align:right;top:100.54px;font-size:5.6px;line-height:1;color:#555;font-weight:normal;">Spy Trojans, backdoors and keyloggers</div><div class="a" style="left:372.8px;top:100.58px;width:41.5px;height:4px;background:#d9d9d9;"></div><div class="a" style="left:418.38px;top:100.17px;font-size:5.8px;line-height:1;color:#7a7a7a;font-weight:normal;">4.4%</div><div class="a" style="left:-231.90px;width:600px;text-align:right;top:111.53px;font-size:5.6px;line-height:1;color:#555;font-weight:normal;">Worms</div><div class="a" style="left:372.8px;top:111.57px;width:24.5px;height:4px;background:#14a287;"></div><div class="a" style="left:401.37px;top:111.16px;font-size:5.8px;line-height:1;color:#333;font-weight:bold;">2.6%</div><div class="a" style="left:-231.90px;width:600px;text-align:right;top:122.52px;font-size:5.6px;line-height:1;color:#555;font-weight:normal;">Viruses</div><div class="a" style="left:372.8px;top:122.56px;width:21.0px;height:4px;background:#14a287;"></div><div class="a" style="left:397.59px;top:122.15px;font-size:5.8px;line-height:1;color:#333;font-weight:bold;">2.2%</div><div class="a" style="left:-231.90px;width:600px;text-align:right;top:133.51px;font-size:5.6px;line-height:1;color:#555;font-weight:normal;">Malicious documents (MSOffice + PDF)</div><div class="a" style="left:372.8px;top:133.55px;width:19.0px;height:4px;background:#d9d9d9;"></div><div class="a" style="left:395.70px;top:133.14px;font-size:5.8px;line-height:1;color:#7a7a7a;font-weight:normal;">2.0%</div><div class="a" style="left:-231.90px;width:600px;text-align:right;top:144.50px;font-size:5.6px;line-height:1;color:#555;font-weight:normal;">Web miners running in browsers</div><div class="a" style="left:372.8px;top:144.54px;width:9.5px;height:4px;background:#14a287;"></div><div class="a" style="left:386.25px;top:144.13px;font-size:5.8px;line-height:1;color:#333;font-weight:bold;">1.0%</div><div class="a" style="left:-231.90px;width:600px;text-align:right;top:155.49px;font-size:5.6px;line-height:1;color:#555;font-weight:normal;">Miners</div><div class="a" style="left:372.8px;top:155.53px;width:9.5px;height:4px;background:#14a287;"></div><div class="a" style="left:386.25px;top:155.12px;font-size:5.8px;line-height:1;color:#333;font-weight:bold;">1.0%</div><div class="a" style="left:-231.90px;width:600px;text-align:right;top:166.48px;font-size:5.6px;line-height:1;color:#555;font-weight:normal;">Malware for AutoCad</div><div class="a" style="left:372.8px;top:166.51999999999998px;width:4.0px;height:4px;background:#14a287;"></div><div class="a" style="left:380.58px;top:166.11px;font-size:5.8px;line-height:1;color:#333;font-weight:bold;">0.4%</div><div class="a" style="left:-231.90px;width:600px;text-align:right;top:177.47px;font-size:5.6px;line-height:1;color:#555;font-weight:normal;">Ransomware</div><div class="a" style="left:372.8px;top:177.51px;width:4.0px;height:4px;background:#d9d9d9;"></div><div class="a" style="left:380.58px;top:177.10px;font-size:5.8px;line-height:1;color:#7a7a7a;font-weight:normal;">0.4%</div><div class="a" style="left:81.30px;width:600px;text-align:center;top:56.49px;font-size:8.4px;line-height:1;color:#222;font-weight:bold;letter-spacing:0.105px;">Self-propagating threats</div><div class="a" style="left:14px;top:209.7px;width:23px;height:0.8px;background:#555;"></div><div class="a" style="left:14.20px;top:212.57px;font-size:7.0px;line-height:1;color:#444;font-weight:normal;letter-spacing:-0.025px;">Percentage of ICS computers on which malware</div><div class="a" style="left:14.20px;top:221.07px;font-size:7.0px;line-height:1;color:#444;font-weight:normal;letter-spacing:0.053px;">from different categories was blocked in the country, H2 2022</div><div class="a" style="left:273px;top:209.7px;width:23px;height:0.8px;background:#555;"></div><div class="a" style="left:273.00px;top:212.57px;font-size:7.0px;line-height:1;color:#444;font-weight:normal;letter-spacing:-0.025px;">Percentage of ICS computers on which malware</div><div class="a" style="left:273.00px;top:221.07px;font-size:7.0px;line-height:1;color:#444;font-weight:normal;letter-spacing:0.053px;">from different categories was blocked in the country, H2 2022</div><div class="a" style="left:8.6px;top:240.5px;width:366.4px;height:41.2px;border:1.3px solid #40b49c;border-radius:7px"></div><div class="a" style="left:26.70px;top:244.40px;font-size:9.8px;line-height:1;color:#333;font-weight:normal;letter-spacing:-0.016px;">Overall, the security measures in place were not sufficient to block</div><div class="a" style="left:26.70px;top:255.90px;font-size:9.8px;line-height:1;color:#333;font-weight:normal;letter-spacing:0.099px;">these threats before they reached network hosts</div><div class="a" style="left:26.70px;top:267.10px;font-size:9.8px;line-height:1;color:#333;font-weight:normal;letter-spacing:0.095px;">(where these threats were ultimately detected by endpoint protection)</div><div class="a" style="left:448.00px;top:252.30px;font-size:8.5px;line-height:1;color:#222;font-weight:bold;letter-spacing:0.050px;">Kaspersky</div><div class="a" style="left:448.00px;top:261.60px;font-size:8.5px;line-height:1;color:#222;font-weight:bold;letter-spacing:0.047px;">ICS CERT</div></div></div>
<div class="a" style="left:120px;top:116px;width:1px;height:404px;background:#d2d2d2;"></div>
<div class="a" style="left:105.5px;top:116px;width:12.5px;height:404px;background:#dadada;"></div>
<div class="a" style="left:105.5px;top:116.5px;width:12.5px;height:12.8px;background:#fff;"></div>
<svg class="a" style="left:108.5px;top:121px;" width="7" height="4" viewBox="0 0 7 4"><path d="M0 3.5h6.4l-3.2-3.2z" fill="#555"/></svg>
<div class="a" style="left:105.5px;top:311px;width:12.5px;height:194.5px;background:#fff;"></div>
<div class="a" style="left:105.5px;top:507px;width:12.5px;height:12.5px;background:#fff;"></div>
<svg class="a" style="left:108.5px;top:511.5px;" width="7" height="4" viewBox="0 0 7 4"><path d="M0 0.3h6.4l-3.2 3.2z" fill="#555"/></svg>
<div class="a" style="left:1010.5px;top:116px;width:12.5px;height:295px;background:#dadada;"></div>
<div class="a" style="left:1010.5px;top:117px;width:12.5px;height:12.3px;background:#fff;"></div>
<svg class="a" style="left:1013.5px;top:121.5px;" width="7" height="4" viewBox="0 0 7 4"><path d="M0 3.5h6.4l-3.2-3.2z" fill="#555"/></svg>
<div class="a" style="left:1010.5px;top:322.5px;width:12.5px;height:15.2px;background:#fff;"></div>
<div class="a" style="left:1010.5px;top:354.7px;width:12.5px;height:12.1px;background:#fff;"></div>
<svg class="a" style="left:1013.5px;top:359px;" width="7" height="4" viewBox="0 0 7 4"><path d="M0 0.3h6.4l-3.2 3.2z" fill="#555"/></svg>
<div class="a" style="left:1010.5px;top:367px;width:12.5px;height:44px;background:#e6e6e6;"></div>
<svg class="a" style="left:1013.5px;top:371px;" width="7" height="8" viewBox="0 0 7 8"><path d="M0 3.5l3.2-3.2l3.2 3.2z M0 7.5l3.2-3.2l3.2 3.2z" fill="#555"/></svg>
<svg class="a" style="left:1013.5px;top:386px;" width="7" height="8" viewBox="0 0 7 8"><path d="M0 0.3l3.2 3.2l3.2-3.2z M0 4.3l3.2 3.2l3.2-3.2z" fill="#555"/></svg>
<div class="a" style="left:121px;top:411px;width:903px;height:1.2px;background:#d0d0d0;"></div>
<div class="a" style="left:1010.5px;top:412.2px;width:12.8px;height:107.5px;background:#dadada;"></div>
<div class="a" style="left:1010.5px;top:413.3px;width:12.8px;height:12.2px;background:#fff;"></div>
<svg class="a" style="left:1013.7px;top:417.5px;" width="7" height="4" viewBox="0 0 7 4"><path d="M0 3.5h6.4l-3.2-3.2z" fill="#555"/></svg>
<div class="a" style="left:1010.5px;top:426.6px;width:12.8px;height:44.7px;background:#fff;"></div>
<div class="a" style="left:1010.5px;top:507px;width:12.8px;height:12.2px;background:#fff;"></div>
<svg class="a" style="left:1013.7px;top:511.5px;" width="7" height="4" viewBox="0 0 7 4"><path d="M0 0.3h6.4l-3.2 3.2z" fill="#555"/></svg>
<div class="a" style="left:130.30px;top:418.00px;font-size:11.7px;line-height:1;color:#4a4a4a;font-weight:normal;letter-spacing:-0.043px;">The diagrams below present statistics (percentage of ICS computers on which malware was blocked in <b>India</b> in H2 2022) on <b>threats most often used as the initial</b></div>
<div class="a" style="left:130.30px;top:432.40px;font-size:11.7px;line-height:1;color:#4a4a4a;font-weight:normal;letter-spacing:-0.053px;"><b>attack vector in a kill chain</b>. In most cases, such threats were delivered via corporate email (often used by ICS engineers to exchange data) or via ad-hoc internet</div>
<div class="a" style="left:130.30px;top:446.20px;font-size:11.7px;line-height:1;color:#4a4a4a;font-weight:normal;letter-spacing:-0.002px;">connections from the OT network (via mobile modems or dual-homed networks). In the case of APT threat actors, these threats were used to abuse internal email</div>
<div class="a" style="left:130.30px;top:460.30px;font-size:11.7px;line-height:1;color:#4a4a4a;font-weight:normal;letter-spacing:0.012px;">services and web applications in order to move laterally, coordinate the attack, and gather data.</div>
<div class="a" style="left:130.30px;top:488.20px;font-size:11.7px;line-height:1;color:#4a4a4a;font-weight:normal;letter-spacing:-0.006px;">If such ‘initial’ threats are detected on a high percentage of hosts in OT networks, this means that, overall, the security measures in place (in the country/industry) were</div>
<div class="a" style="left:130.30px;top:502.20px;font-size:11.7px;line-height:1;color:#4a4a4a;font-weight:normal;letter-spacing:0.062px;">not sufficient to block these threats before they reached network hosts (where they were ultimately detected by endpoint protection).</div>
<div class="a" style="left:21.2px;top:135.1px;width:68px;height:39px;background:#d4d4d4"></div>
<div class="a" style="left:21.7px;top:135.6px;width:67px;height:38px;overflow:hidden;background:#fff"><div style="position:absolute;left:0;top:0;width:507px;height:285px;transform:scale(0.13215);transform-origin:0 0"><div class="a" style="left:0px;top:0px;width:507px;height:285px;background:#fff;"></div><div class="a" style="left:14px;top:22.6px;width:28px;height:1.3px;background:#222;"></div><div class="a" style="left:14px;top:29px;width:40px;height:9px;background:#555;"></div><div class="a" style="left:56px;top:31px;width:200px;height:6px;background:#b0b0b0;"></div><div class="a" style="left:20px;top:76px;width:200px;height:0.8px;background:#eee;"></div><div class="a" style="left:20px;top:91px;width:200px;height:0.8px;background:#eee;"></div><div class="a" style="left:20px;top:106px;width:200px;height:0.8px;background:#eee;"></div><div class="a" style="left:20px;top:121px;width:200px;height:0.8px;background:#eee;"></div><div class="a" style="left:20px;top:136px;width:200px;height:0.8px;background:#eee;"></div><div class="a" style="left:20px;top:151px;width:200px;height:0.8px;background:#eee;"></div><div class="a" style="left:20px;top:166px;width:200px;height:0.8px;background:#eee;"></div><div class="a" style="left:47px;top:76px;width:15px;height:90px;background:#127a68;"></div><div class="a" style="left:62px;top:106px;width:19px;height:60px;background:#35c4b2;"></div><div class="a" style="left:107px;top:84px;width:15px;height:82px;background:#127a68;"></div><div class="a" style="left:122px;top:101px;width:19px;height:65px;background:#35c4b2;"></div><div class="a" style="left:168px;top:78px;width:15px;height:88px;background:#127a68;"></div><div class="a" style="left:183px;top:100px;width:19px;height:66px;background:#35c4b2;"></div><div class="a" style="left:40px;top:176px;width:70px;height:2px;background:#aaa;"></div><div class="a" style="left:130px;top:176px;width:60px;height:2px;background:#aaa;"></div><div class="a" style="left:262px;top:70px;width:230px;height:0.8px;background:#eee;"></div><div class="a" style="left:262px;top:84px;width:230px;height:0.8px;background:#eee;"></div><div class="a" style="left:262px;top:98px;width:230px;height:0.8px;background:#eee;"></div><div class="a" style="left:262px;top:112px;width:230px;height:0.8px;background:#eee;"></div><div class="a" style="left:262px;top:126px;width:230px;height:0.8px;background:#eee;"></div><div class="a" style="left:262px;top:140px;width:230px;height:0.8px;background:#eee;"></div><div class="a" style="left:262px;top:154px;width:230px;height:0.8px;background:#eee;"></div><div class="a" style="left:262px;top:168px;width:230px;height:0.8px;background:#eee;"></div><div class="a" style="left:272.0px;top:138px;width:8px;height:28px;background:#45bfae;"></div><div class="a" style="left:285.2px;top:126px;width:8px;height:40px;background:#45bfae;"></div><div class="a" style="left:298.4px;top:120px;width:8px;height:46px;background:#45bfae;"></div><div class="a" style="left:311.6px;top:116px;width:8px;height:50px;background:#45bfae;"></div><div class="a" style="left:324.8px;top:104px;width:8px;height:62px;background:#f08070;"></div><div class="a" style="left:338.0px;top:108px;width:8px;height:58px;background:#45bfae;"></div><div class="a" style="left:351.2px;top:104px;width:8px;height:62px;background:#45bfae;"></div><div class="a" style="left:364.4px;top:102px;width:8px;height:64px;background:#45bfae;"></div><div class="a" style="left:377.6px;top:100px;width:8px;height:66px;background:#45bfae;"></div><div class="a" style="left:390.8px;top:96px;width:8px;height:70px;background:#45bfae;"></div><div class="a" style="left:404.0px;top:90px;width:8px;height:76px;background:#45bfae;"></div><div class="a" style="left:417.2px;top:84px;width:8px;height:82px;background:#45bfae;"></div><div class="a" style="left:430.4px;top:86px;width:8px;height:80px;background:#45bfae;"></div><div class="a" style="left:443.6px;top:76px;width:8px;height:90px;background:#45bfae;"></div><div class="a" style="left:456.79999999999995px;top:62px;width:8px;height:104px;background:#45bfae;"></div><div class="a" style="left:470.0px;top:54px;width:8px;height:112px;background:#45bfae;"></div><div class="a" style="left:322px;top:98px;width:16px;height:4px;background:#e03030;"></div><svg class="a" style="left:300px;top:100px" width="40" height="90"><path d="M30 2 L29 50 L10 85" fill="none" stroke="#e02b2b" stroke-width="3"/></svg><div class="a" style="left:14px;top:210px;width:45px;height:8px;background:#666;"></div><div class="a" style="left:59px;top:212px;width:90px;height:5px;background:#aaa;"></div><div class="a" style="left:273px;top:210px;width:45px;height:8px;background:#666;"></div><div class="a" style="left:318px;top:212px;width:90px;height:5px;background:#aaa;"></div><div class="a" style="left:8.6px;top:240.5px;width:366.4px;height:41.2px;border:6px solid #52bba5;border-radius:9px"></div><div class="a" style="left:27px;top:250px;width:280px;height:5px;background:#b5b5b5;"></div><div class="a" style="left:27px;top:261px;width:220px;height:5px;background:#b5b5b5;"></div><div class="a" style="left:27px;top:271px;width:300px;height:5px;background:#c0c0c0;"></div><div class="a" style="left:448px;top:253px;width:44px;height:7px;background:#666;"></div><div class="a" style="left:448px;top:262px;width:40px;height:7px;background:#666;"></div><div class="a" style="left:485px;top:34px;width:5px;height:5px;background:#777;"></div></div></div>
<div class="a" style="left:-584.00px;width:600px;text-align:right;top:134.35px;font-size:11.4px;line-height:1;color:#555;font-weight:normal;">8</div>
<div class="a" style="left:21.2px;top:189.4px;width:68px;height:39px;background:#d4d4d4"></div>
<div class="a" style="left:21.7px;top:189.9px;width:67px;height:38px;overflow:hidden;background:#fff"><div style="position:absolute;left:0;top:0;width:507px;height:285px;transform:scale(0.13215);transform-origin:0 0"><div class="a" style="left:0px;top:0px;width:507px;height:285px;background:#fff;"></div><div class="a" style="left:14px;top:22.6px;width:28px;height:1.3px;background:#222;"></div><div class="a" style="left:14.40px;top:26.62px;font-size:11.2px;line-height:1;color:#333;font-weight:normal;letter-spacing:-0.005px;">Threat types for ICS computers, <b>India</b></div><div class="a" style="left:485.30px;top:32.01px;font-size:6.6px;line-height:1;color:#444;font-weight:normal;letter-spacing:-0.934px;">13</div><div class="a" style="left:-177.00px;width:600px;text-align:center;top:186.16px;font-size:5.6px;line-height:1;color:#7a7a7a;font-weight:normal;">0%</div><div class="a" style="left:140.7px;top:74.5px;width:0.6px;height:106.1px;background:#e6e6e6;"></div><div class="a" style="left:-158.94px;width:600px;text-align:center;top:186.16px;font-size:5.6px;line-height:1;color:#7a7a7a;font-weight:normal;">2%</div><div class="a" style="left:158.7px;top:74.5px;width:0.6px;height:106.1px;background:#e6e6e6;"></div><div class="a" style="left:-140.88px;width:600px;text-align:center;top:186.16px;font-size:5.6px;line-height:1;color:#7a7a7a;font-weight:normal;">4%</div><div class="a" style="left:176.7px;top:74.5px;width:0.6px;height:106.1px;background:#e6e6e6;"></div><div class="a" style="left:-122.82px;width:600px;text-align:center;top:186.16px;font-size:5.6px;line-height:1;color:#7a7a7a;font-weight:normal;">6%</div><div class="a" style="left:194.7px;top:74.5px;width:0.6px;height:106.1px;background:#e6e6e6;"></div><div class="a" style="left:-104.76px;width:600px;text-align:center;top:186.16px;font-size:5.6px;line-height:1;color:#7a7a7a;font-weight:normal;">8%</div><div class="a" style="left:213.2px;top:74.5px;width:0.6px;height:106.1px;background:#e6e6e6;"></div><div class="a" style="left:-86.70px;width:600px;text-align:center;top:186.16px;font-size:5.6px;line-height:1;color:#7a7a7a;font-weight:normal;">10%</div><div class="a" style="left:231.2px;top:74.5px;width:0.6px;height:106.1px;background:#e6e6e6;"></div><div class="a" style="left:-68.64px;width:600px;text-align:center;top:186.16px;font-size:5.6px;line-height:1;color:#7a7a7a;font-weight:normal;">12%</div><div class="a" style="left:-481.70px;width:600px;text-align:right;top:78.56px;font-size:5.6px;line-height:1;color:#555;font-weight:normal;">Malicious scripts and phishing pages</div><div class="a" style="left:123px;top:78.6px;width:86.5px;height:4px;background:#14a287;"></div><div class="a" style="left:213.69px;top:78.19px;font-size:5.8px;line-height:1;color:#333;font-weight:bold;">9.6%</div><div class="a" style="left:-481.70px;width:600px;text-align:right;top:89.19px;font-size:5.6px;line-height:1;color:#555;font-weight:normal;">Denylisted internet resources</div><div class="a" style="left:123px;top:89.22999999999999px;width:78.5px;height:4px;background:#14a287;"></div><div class="a" style="left:205.56px;top:88.82px;font-size:5.8px;line-height:1;color:#333;font-weight:bold;">8.7%</div><div class="a" style="left:-481.70px;width:600px;text-align:right;top:99.82px;font-size:5.6px;line-height:1;color:#555;font-weight:normal;">Spy Trojans, backdoors and keyloggers</div><div class="a" style="left:123px;top:99.86px;width:39.5px;height:4px;background:#d9d9d9;"></div><div class="a" style="left:166.73px;top:99.45px;font-size:5.8px;line-height:1;color:#7a7a7a;font-weight:normal;">4.4%</div><div class="a" style="left:-481.70px;width:600px;text-align:right;top:110.45px;font-size:5.6px;line-height:1;color:#555;font-weight:normal;">Worms</div><div class="a" style="left:123px;top:110.49px;width:23.5px;height:4px;background:#d9d9d9;"></div><div class="a" style="left:150.48px;top:110.08px;font-size:5.8px;line-height:1;color:#7a7a7a;font-weight:normal;">2.6%</div><div class="a" style="left:-481.70px;width:600px;text-align:right;top:121.08px;font-size:5.6px;line-height:1;color:#555;font-weight:normal;">Viruses</div><div class="a" style="left:123px;top:121.12px;width:20.0px;height:4px;background:#d9d9d9;"></div><div class="a" style="left:146.87px;top:120.71px;font-size:5.8px;line-height:1;color:#7a7a7a;font-weight:normal;">2.2%</div><div class="a" style="left:-481.70px;width:600px;text-align:right;top:131.71px;font-size:5.6px;line-height:1;color:#555;font-weight:normal;">Malicious documents (MSOffice + PDF)</div><div class="a" style="left:123px;top:131.75px;width:18.0px;height:4px;background:#14a287;"></div><div class="a" style="left:145.06px;top:131.34px;font-size:5.8px;line-height:1;color:#333;font-weight:bold;">2.0%</div><div class="a" style="left:-481.70px;width:600px;text-align:right;top:142.34px;font-size:5.6px;line-height:1;color:#555;font-weight:normal;">Web miners running in browsers</div><div class="a" style="left:123px;top:142.38px;width:9.0px;height:4px;background:#d9d9d9;"></div><div class="a" style="left:136.03px;top:141.97px;font-size:5.8px;line-height:1;color:#7a7a7a;font-weight:normal;">1.0%</div><div class="a" style="left:-481.70px;width:600px;text-align:right;top:152.97px;font-size:5.6px;line-height:1;color:#555;font-weight:normal;">Miners</div><div class="a" style="left:123px;top:153.01px;width:9.0px;height:4px;background:#d9d9d9;"></div><div class="a" style="left:136.03px;top:152.60px;font-size:5.8px;line-height:1;color:#7a7a7a;font-weight:normal;">1.0%</div><div class="a" style="left:-481.70px;width:600px;text-align:right;top:163.60px;font-size:5.6px;line-height:1;color:#555;font-weight:normal;">Malware for AutoCad</div><div class="a" style="left:123px;top:163.64px;width:3.5px;height:4px;background:#d9d9d9;"></div><div class="a" style="left:130.61px;top:163.23px;font-size:5.8px;line-height:1;color:#7a7a7a;font-weight:normal;">0.4%</div><div class="a" style="left:-481.70px;width:600px;text-align:right;top:174.23px;font-size:5.6px;line-height:1;color:#555;font-weight:normal;">Ransomware</div><div class="a" style="left:123px;top:174.26999999999998px;width:3.5px;height:4px;background:#d9d9d9;"></div><div class="a" style="left:130.61px;top:173.86px;font-size:5.8px;line-height:1;color:#7a7a7a;font-weight:normal;">0.4%</div><div class="a" style="left:25.50px;top:56.89px;font-size:8.4px;line-height:1;color:#222;font-weight:bold;letter-spacing:0.036px;">Threats most often used as the initial attack vector</div><div class="a" style="left:72.80px;width:600px;text-align:center;top:189.66px;font-size:5.6px;line-height:1;color:#7a7a7a;font-weight:normal;">0%</div><div class="a" style="left:391.2px;top:74.5px;width:0.6px;height:109.5px;background:#e6e6e6;"></div><div class="a" style="left:91.70px;width:600px;text-align:center;top:189.66px;font-size:5.6px;line-height:1;color:#7a7a7a;font-weight:normal;">2%</div><div class="a" style="left:410.2px;top:74.5px;width:0.6px;height:109.5px;background:#e6e6e6;"></div><div class="a" style="left:110.60px;width:600px;text-align:center;top:189.66px;font-size:5.6px;line-height:1;color:#7a7a7a;font-weight:normal;">4%</div><div class="a" style="left:429.2px;top:74.5px;width:0.6px;height:109.5px;background:#e6e6e6;"></div><div class="a" style="left:129.50px;width:600px;text-align:center;top:189.66px;font-size:5.6px;line-height:1;color:#7a7a7a;font-weight:normal;">6%</div><div class="a" style="left:448.2px;top:74.5px;width:0.6px;height:109.5px;background:#e6e6e6;"></div><div class="a" style="left:148.40px;width:600px;text-align:center;top:189.66px;font-size:5.6px;line-height:1;color:#7a7a7a;font-weight:normal;">8%</div><div class="a" style="left:467.2px;top:74.5px;width:0.6px;height:109.5px;background:#e6e6e6;"></div><div class="a" style="left:167.30px;width:600px;text-align:center;top:189.66px;font-size:5.6px;line-height:1;color:#7a7a7a;font-weight:normal;">10%</div><div class="a" style="left:485.7px;top:74.5px;width:0.6px;height:109.5px;background:#e6e6e6;"></div><div class="a" style="left:186.20px;width:600px;text-align:center;top:189.66px;font-size:5.6px;line-height:1;color:#7a7a7a;font-weight:normal;">12%</div><div class="a" style="left:-231.90px;width:600px;text-align:right;top:78.56px;font-size:5.6px;line-height:1;color:#555;font-weight:normal;">Malicious scripts and phishing pages</div><div class="a" style="left:372.8px;top:78.6px;width:90.5px;height:4px;background:#d9d9d9;"></div><div class="a" style="left:467.52px;top:78.19px;font-size:5.8px;line-height:1;color:#7a7a7a;font-weight:normal;">9.6%</div><div class="a" style="left:-231.90px;width:600px;text-align:right;top:89.55px;font-size:5.6px;line-height:1;color:#555;font-weight:normal;">Denylisted internet resources</div><div class="a" style="left:372.8px;top:89.58999999999999px;width:82.0px;height:4px;background:#d9d9d9;"></div><div class="a" style="left:459.01px;top:89.18px;font-size:5.8px;line-height:1;color:#7a7a7a;font-weight:normal;">8.7%</div><div class="a" style="left:-231.90px;width:600px;text-align:right;top:100.54px;font-size:5.6px;line-height:1;color:#555;font-weight:normal;">Spy Trojans, backdoors and keyloggers</div><div class="a" style="left:372.8px;top:100.58px;width:41.5px;height:4px;background:#d9d9d9;"></div><div class="a" style="left:418.38px;top:100.17px;font-size:5.8px;line-height:1;color:#7a7a7a;font-weight:normal;">4.4%</div><div class="a" style="left:-231.90px;width:600px;text-align:right;top:111.53px;font-size:5.6px;line-height:1;color:#555;font-weight:normal;">Worms</div><div class="a" style="left:372.8px;top:111.57px;width:24.5px;height:4px;background:#14a287;"></div><div class="a" style="left:401.37px;top:111.16px;font-size:5.8px;line-height:1;color:#333;font-weight:bold;">2.6%</div><div class="a" style="left:-231.90px;width:600px;text-align:right;top:122.52px;font-size:5.6px;line-height:1;color:#555;font-weight:normal;">Viruses</div><div class="a" style="left:372.8px;top:122.56px;width:21.0px;height:4px;background:#14a287;"></div><div class="a" style="left:397.59px;top:122.15px;font-size:5.8px;line-height:1;color:#333;font-weight:bold;">2.2%</div><div class="a" style="left:-231.90px;width:600px;text-align:right;top:133.51px;font-size:5.6px;line-height:1;color:#555;font-weight:normal;">Malicious documents (MSOffice + PDF)</div><div class="a" style="left:372.8px;top:133.55px;width:19.0px;height:4px;background:#d9d9d9;"></div><div class="a" style="left:395.70px;top:133.14px;font-size:5.8px;line-height:1;color:#7a7a7a;font-weight:normal;">2.0%</div><div class="a" style="left:-231.90px;width:600px;text-align:right;top:144.50px;font-size:5.6px;line-height:1;color:#555;font-weight:normal;">Web miners running in browsers</div><div class="a" style="left:372.8px;top:144.54px;width:9.5px;height:4px;background:#14a287;"></div><div class="a" style="left:386.25px;top:144.13px;font-size:5.8px;line-height:1;color:#333;font-weight:bold;">1.0%</div><div class="a" style="left:-231.90px;width:600px;text-align:right;top:155.49px;font-size:5.6px;line-height:1;color:#555;font-weight:normal;">Miners</div><div class="a" style="left:372.8px;top:155.53px;width:9.5px;height:4px;background:#14a287;"></div><div class="a" style="left:386.25px;top:155.12px;font-size:5.8px;line-height:1;color:#333;font-weight:bold;">1.0%</div><div class="a" style="left:-231.90px;width:600px;text-align:right;top:166.48px;font-size:5.6px;line-height:1;color:#555;font-weight:normal;">Malware for AutoCad</div><div class="a" style="left:372.8px;top:166.51999999999998px;width:4.0px;height:4px;background:#14a287;"></div><div class="a" style="left:380.58px;top:166.11px;font-size:5.8px;line-height:1;color:#333;font-weight:bold;">0.4%</div><div class="a" style="left:-231.90px;width:600px;text-align:right;top:177.47px;font-size:5.6px;line-height:1;color:#555;font-weight:normal;">Ransomware</div><div class="a" style="left:372.8px;top:177.51px;width:4.0px;height:4px;background:#d9d9d9;"></div><div class="a" style="left:380.58px;top:177.10px;font-size:5.8px;line-height:1;color:#7a7a7a;font-weight:normal;">0.4%</div><div class="a" style="left:81.30px;width:600px;text-align:center;top:56.49px;font-size:8.4px;line-height:1;color:#222;font-weight:bold;letter-spacing:0.105px;">Self-propagating threats</div><div class="a" style="left:14px;top:209.7px;width:23px;height:0.8px;background:#555;"></div><div class="a" style="left:14.20px;top:212.57px;font-size:7.0px;line-height:1;color:#444;font-weight:normal;letter-spacing:-0.025px;">Percentage of ICS computers on which malware</div><div class="a" style="left:14.20px;top:221.07px;font-size:7.0px;line-height:1;color:#444;font-weight:normal;letter-spacing:0.053px;">from different categories was blocked in the country, H2 2022</div><div class="a" style="left:273px;top:209.7px;width:23px;height:0.8px;background:#555;"></div><div class="a" style="left:273.00px;top:212.57px;font-size:7.0px;line-height:1;color:#444;font-weight:normal;letter-spacing:-0.025px;">Percentage of ICS computers on which malware</div><div class="a" style="left:273.00px;top:221.07px;font-size:7.0px;line-height:1;color:#444;font-weight:normal;letter-spacing:0.053px;">from different categories was blocked in the country, H2 2022</div><div class="a" style="left:8.6px;top:240.5px;width:366.4px;height:41.2px;border:6px solid #40b49c;border-radius:7px"></div><div class="a" style="left:14px;top:21px;width:45px;height:4px;background:#333;"></div><div class="a" style="left:273px;top:209.7px;width:23px;height:3px;background:#555;"></div><div class="a" style="left:14px;top:209.7px;width:23px;height:3px;background:#555;"></div><div class="a" style="left:26.70px;top:244.40px;font-size:9.8px;line-height:1;color:#333;font-weight:normal;letter-spacing:-0.016px;">Overall, the security measures in place were not sufficient to block</div><div class="a" style="left:26.70px;top:255.90px;font-size:9.8px;line-height:1;color:#333;font-weight:normal;letter-spacing:0.099px;">these threats before they reached network hosts</div><div class="a" style="left:26.70px;top:267.10px;font-size:9.8px;line-height:1;color:#333;font-weight:normal;letter-spacing:0.095px;">(where these threats were ultimately detected by endpoint protection)</div><div class="a" style="left:448.00px;top:252.30px;font-size:8.5px;line-height:1;color:#222;font-weight:bold;letter-spacing:0.050px;">Kaspersky</div><div class="a" style="left:448.00px;top:261.60px;font-size:8.5px;line-height:1;color:#222;font-weight:bold;letter-spacing:0.047px;">ICS CERT</div></div></div>
<div class="a" style="left:-584.00px;width:600px;text-align:right;top:188.65px;font-size:11.4px;line-height:1;color:#555;font-weight:normal;">9</div>
<div class="a" style="left:21.2px;top:243.8px;width:68px;height:39px;background:#d4d4d4"></div>
<div class="a" style="left:21.7px;top:244.3px;width:67px;height:38px;overflow:hidden;background:#fff"><div style="position:absolute;left:0;top:0;width:507px;height:285px;transform:scale(0.13215);transform-origin:0 0"><div class="a" style="left:0px;top:0px;width:507px;height:285px;background:#fff;"></div><div class="a" style="left:14px;top:22.6px;width:28px;height:1.3px;background:#222;"></div><div class="a" style="left:14px;top:29px;width:40px;height:9px;background:#555;"></div><div class="a" style="left:56px;top:31px;width:120px;height:6px;background:#a8a8a8;"></div><div class="a" style="left:16px;top:68px;width:4px;height:4px;background:#e88;"></div><div class="a" style="left:28px;top:68px;width:140px;height:4px;background:#888;"></div><div class="a" style="left:16px;top:82px;width:4px;height:4px;background:#e88;"></div><div class="a" style="left:28px;top:82px;width:140px;height:4px;background:#888;"></div><div class="a" style="left:28px;top:90px;width:120px;height:4px;background:#b5b5b5;"></div><div class="a" style="left:28px;top:98px;width:140px;height:4px;background:#b5b5b5;"></div><div class="a" style="left:16px;top:120px;width:4px;height:4px;background:#e88;"></div><div class="a" style="left:28px;top:120px;width:140px;height:4px;background:#888;"></div><div class="a" style="left:28px;top:128px;width:120px;height:4px;background:#b5b5b5;"></div><div class="a" style="left:28px;top:136px;width:140px;height:4px;background:#b5b5b5;"></div><div class="a" style="left:28px;top:144px;width:120px;height:4px;background:#b5b5b5;"></div><div class="a" style="left:16px;top:170px;width:4px;height:4px;background:#e88;"></div><div class="a" style="left:28px;top:170px;width:140px;height:4px;background:#888;"></div><div class="a" style="left:28px;top:178px;width:120px;height:4px;background:#b5b5b5;"></div><div class="a" style="left:330px;top:68px;width:0.8px;height:105px;background:#e6e6e6;"></div><div class="a" style="left:354px;top:68px;width:0.8px;height:105px;background:#e6e6e6;"></div><div class="a" style="left:378px;top:68px;width:0.8px;height:105px;background:#e6e6e6;"></div><div class="a" style="left:402px;top:68px;width:0.8px;height:105px;background:#e6e6e6;"></div><div class="a" style="left:426px;top:68px;width:0.8px;height:105px;background:#e6e6e6;"></div><div class="a" style="left:450px;top:68px;width:0.8px;height:105px;background:#e6e6e6;"></div><div class="a" style="left:474px;top:68px;width:0.8px;height:105px;background:#e6e6e6;"></div><div class="a" style="left:498px;top:68px;width:0.8px;height:105px;background:#e6e6e6;"></div><div class="a" style="left:200px;top:68px;width:290px;height:0.8px;background:#e6e6e6;"></div><div class="a" style="left:210px;top:80px;width:120px;height:3px;background:#d5d5d5;"></div><div class="a" style="left:330px;top:79px;width:150px;height:5px;background:#cfcfcf;"></div><div class="a" style="left:210px;top:92px;width:120px;height:3px;background:#d5d5d5;"></div><div class="a" style="left:330px;top:91px;width:90px;height:5px;background:#6fcfbd;"></div><div class="a" style="left:210px;top:104px;width:120px;height:3px;background:#d5d5d5;"></div><div class="a" style="left:330px;top:103px;width:40px;height:5px;background:#d8d8d8;"></div><div class="a" style="left:210px;top:116px;width:120px;height:3px;background:#d5d5d5;"></div><div class="a" style="left:330px;top:115px;width:30px;height:5px;background:#d0d0d0;"></div><div class="a" style="left:210px;top:128px;width:120px;height:3px;background:#d5d5d5;"></div><div class="a" style="left:330px;top:127px;width:35px;height:5px;background:#cfcfcf;"></div><div class="a" style="left:210px;top:140px;width:120px;height:3px;background:#d5d5d5;"></div><div class="a" style="left:330px;top:139px;width:20px;height:5px;background:#d8d8d8;"></div><div class="a" style="left:210px;top:152px;width:120px;height:3px;background:#d5d5d5;"></div><div class="a" style="left:330px;top:151px;width:15px;height:5px;background:#8fd9c9;"></div><div class="a" style="left:210px;top:164px;width:120px;height:3px;background:#d5d5d5;"></div><div class="a" style="left:330px;top:163px;width:10px;height:5px;background:#d8d8d8;"></div><svg class="a" style="left:300px;top:80px" width="200" height="110"><path d="M195 5 L40 100" fill="none" stroke="#e83030" stroke-width="3.5"/><path d="M32 106 l14-4 l-7-8z" fill="#e83030"/></svg><div class="a" style="left:280px;top:198px;width:60px;height:9px;background:#666;"></div><div class="a" style="left:340px;top:200px;width:110px;height:5px;background:#aaa;"></div><div class="a" style="left:8.6px;top:240.5px;width:366.4px;height:41.2px;border:6px solid #52bba5;border-radius:9px"></div><div class="a" style="left:27px;top:258px;width:320px;height:6px;background:#b0b0b0;"></div><div class="a" style="left:448px;top:253px;width:44px;height:7px;background:#666;"></div><div class="a" style="left:448px;top:262px;width:40px;height:7px;background:#666;"></div><div class="a" style="left:485px;top:34px;width:5px;height:5px;background:#777;"></div></div></div>
<div class="a" style="left:-584.00px;width:600px;text-align:right;top:243.05px;font-size:11.4px;line-height:1;color:#555;font-weight:normal;">10</div>
<div class="a" style="left:21.2px;top:298.4px;width:68px;height:39px;background:#d4d4d4"></div>
<div class="a" style="left:21.7px;top:298.9px;width:67px;height:38px;overflow:hidden;background:#fff"><div style="position:absolute;left:0;top:0;width:507px;height:285px;transform:scale(0.13215);transform-origin:0 0"><div class="a" style="left:0;top:0;width:507px;height:285px;background:#72cdbd"></div><div class="a" style="left:0;top:0;width:507px;height:285px;background:radial-gradient(ellipse 110px 150px at 335px 40px,#c4fb86 0%,rgba(190,248,135,0.8) 35%,rgba(114,207,192,0) 100%)"></div><div class="a" style="left:0;top:0;width:507px;height:285px;background:radial-gradient(ellipse 70px 140px at 370px 190px,rgba(165,242,150,0.85) 0%,rgba(114,207,192,0) 100%)"></div><div class="a" style="left:0;top:0;width:507px;height:285px;background:radial-gradient(ellipse 150px 120px at 507px 285px,#8ae5cc 0%,rgba(114,207,192,0) 100%)"></div><div class="a" style="left:0;top:0;width:507px;height:285px;background:radial-gradient(ellipse 90px 110px at 507px 60px,#68c6b6 0%,rgba(104,198,182,0) 100%)"></div><svg class="a" style="left:0;top:0" width="507" height="285"><defs><radialGradient id="s11" cx="0" cy="1" r="0.6"><stop offset="0" stop-color="#5fb8a8"/><stop offset="1" stop-color="#73cfc0"/></radialGradient></defs><path d="M0 0 H225 L345 100 L325 240 L225 285 H0z" fill="url(#s11)"/></svg><div class="a" style="left:40px;top:42px;width:95px;height:4px;background:#d8f0ea;"></div><div class="a" style="left:14.00px;top:139.83px;font-size:38px;line-height:1;color:#fff;font-weight:bold;">India</div></div></div>
<div class="a" style="left:-584.00px;width:600px;text-align:right;top:297.65px;font-size:11.4px;line-height:1;color:#555;font-weight:normal;">11</div>
<div class="a" style="left:21.2px;top:352.3px;width:68px;height:39px;background:#d4d4d4"></div>
<div class="a" style="left:21.7px;top:352.8px;width:67px;height:38px;overflow:hidden;background:#fff"><div style="position:absolute;left:0;top:0;width:507px;height:285px;transform:scale(0.13215);transform-origin:0 0"><div class="a" style="left:0px;top:0px;width:507px;height:285px;background:#fff;"></div><div class="a" style="left:14px;top:22.6px;width:28px;height:1.3px;background:#222;"></div><div class="a" style="left:14px;top:29px;width:40px;height:9px;background:#555;"></div><div class="a" style="left:56px;top:31px;width:200px;height:6px;background:#b0b0b0;"></div><div class="a" style="left:20px;top:76px;width:200px;height:0.8px;background:#eee;"></div><div class="a" style="left:20px;top:91px;width:200px;height:0.8px;background:#eee;"></div><div class="a" style="left:20px;top:106px;width:200px;height:0.8px;background:#eee;"></div><div class="a" style="left:20px;top:121px;width:200px;height:0.8px;background:#eee;"></div><div class="a" style="left:20px;top:136px;width:200px;height:0.8px;background:#eee;"></div><div class="a" style="left:20px;top:151px;width:200px;height:0.8px;background:#eee;"></div><div class="a" style="left:20px;top:166px;width:200px;height:0.8px;background:#eee;"></div><div class="a" style="left:47px;top:76px;width:15px;height:90px;background:#127a68;"></div><div class="a" style="left:62px;top:106px;width:19px;height:60px;background:#35c4b2;"></div><div class="a" style="left:107px;top:84px;width:15px;height:82px;background:#127a68;"></div><div class="a" style="left:122px;top:101px;width:19px;height:65px;background:#35c4b2;"></div><div class="a" style="left:168px;top:78px;width:15px;height:88px;background:#127a68;"></div><div class="a" style="left:183px;top:100px;width:19px;height:66px;background:#35c4b2;"></div><div class="a" style="left:40px;top:176px;width:70px;height:2px;background:#aaa;"></div><div class="a" style="left:130px;top:176px;width:60px;height:2px;background:#aaa;"></div><div class="a" style="left:262px;top:70px;width:230px;height:0.8px;background:#eee;"></div><div class="a" style="left:262px;top:84px;width:230px;height:0.8px;background:#eee;"></div><div class="a" style="left:262px;top:98px;width:230px;height:0.8px;background:#eee;"></div><div class="a" style="left:262px;top:112px;width:230px;height:0.8px;background:#eee;"></div><div class="a" style="left:262px;top:126px;width:230px;height:0.8px;background:#eee;"></div><div class="a" style="left:262px;top:140px;width:230px;height:0.8px;background:#eee;"></div><div class="a" style="left:262px;top:154px;width:230px;height:0.8px;background:#eee;"></div><div class="a" style="left:262px;top:168px;width:230px;height:0.8px;background:#eee;"></div><div class="a" style="left:272.0px;top:138px;width:8px;height:28px;background:#45bfae;"></div><div class="a" style="left:285.2px;top:126px;width:8px;height:40px;background:#45bfae;"></div><div class="a" style="left:298.4px;top:120px;width:8px;height:46px;background:#45bfae;"></div><div class="a" style="left:311.6px;top:116px;width:8px;height:50px;background:#45bfae;"></div><div class="a" style="left:324.8px;top:104px;width:8px;height:62px;background:#f08070;"></div><div class="a" style="left:338.0px;top:108px;width:8px;height:58px;background:#45bfae;"></div><div class="a" style="left:351.2px;top:104px;width:8px;height:62px;background:#45bfae;"></div><div class="a" style="left:364.4px;top:102px;width:8px;height:64px;background:#45bfae;"></div><div class="a" style="left:377.6px;top:100px;width:8px;height:66px;background:#45bfae;"></div><div class="a" style="left:390.8px;top:96px;width:8px;height:70px;background:#45bfae;"></div><div class="a" style="left:404.0px;top:90px;width:8px;height:76px;background:#45bfae;"></div><div class="a" style="left:417.2px;top:84px;width:8px;height:82px;background:#45bfae;"></div><div class="a" style="left:430.4px;top:86px;width:8px;height:80px;background:#45bfae;"></div><div class="a" style="left:443.6px;top:76px;width:8px;height:90px;background:#45bfae;"></div><div class="a" style="left:456.79999999999995px;top:62px;width:8px;height:104px;background:#45bfae;"></div><div class="a" style="left:470.0px;top:54px;width:8px;height:112px;background:#45bfae;"></div><div class="a" style="left:322px;top:98px;width:16px;height:4px;background:#e03030;"></div><svg class="a" style="left:300px;top:100px" width="40" height="90"><path d="M30 2 L29 50 L10 85" fill="none" stroke="#e02b2b" stroke-width="3"/></svg><div class="a" style="left:14px;top:210px;width:45px;height:8px;background:#666;"></div><div class="a" style="left:59px;top:212px;width:90px;height:5px;background:#aaa;"></div><div class="a" style="left:273px;top:210px;width:45px;height:8px;background:#666;"></div><div class="a" style="left:318px;top:212px;width:90px;height:5px;background:#aaa;"></div><div class="a" style="left:8.6px;top:240.5px;width:366.4px;height:41.2px;border:6px solid #52bba5;border-radius:9px"></div><div class="a" style="left:27px;top:250px;width:280px;height:5px;background:#b5b5b5;"></div><div class="a" style="left:27px;top:261px;width:220px;height:5px;background:#b5b5b5;"></div><div class="a" style="left:27px;top:271px;width:300px;height:5px;background:#c0c0c0;"></div><div class="a" style="left:448px;top:253px;width:44px;height:7px;background:#666;"></div><div class="a" style="left:448px;top:262px;width:40px;height:7px;background:#666;"></div><div class="a" style="left:485px;top:34px;width:5px;height:5px;background:#777;"></div></div></div>
<div class="a" style="left:-584.00px;width:600px;text-align:right;top:351.55px;font-size:11.4px;line-height:1;color:#555;font-weight:normal;">12</div>
<div class="a" style="left:21.2px;top:406.9px;width:68px;height:39px;background:#d4d4d4"></div>
<div class="a" style="left:21.7px;top:407.4px;width:67px;height:38px;overflow:hidden;background:#fff"><div style="position:absolute;left:0;top:0;width:507px;height:285px;transform:scale(0.13215);transform-origin:0 0"><div class="a" style="left:0px;top:0px;width:507px;height:285px;background:#fff;"></div><div class="a" style="left:14px;top:22.6px;width:28px;height:1.3px;background:#222;"></div><div class="a" style="left:14.40px;top:26.62px;font-size:11.2px;line-height:1;color:#333;font-weight:normal;letter-spacing:-0.005px;">Threat types for ICS computers, <b>India</b></div><div class="a" style="left:485.30px;top:32.01px;font-size:6.6px;line-height:1;color:#444;font-weight:normal;letter-spacing:-0.934px;">13</div><div class="a" style="left:-177.00px;width:600px;text-align:center;top:186.16px;font-size:5.6px;line-height:1;color:#7a7a7a;font-weight:normal;">0%</div><div class="a" style="left:140.7px;top:74.5px;width:0.6px;height:106.1px;background:#e6e6e6;"></div><div class="a" style="left:-158.94px;width:600px;text-align:center;top:186.16px;font-size:5.6px;line-height:1;color:#7a7a7a;font-weight:normal;">2%</div><div class="a" style="left:158.7px;top:74.5px;width:0.6px;height:106.1px;background:#e6e6e6;"></div><div class="a" style="left:-140.88px;width:600px;text-align:center;top:186.16px;font-size:5.6px;line-height:1;color:#7a7a7a;font-weight:normal;">4%</div><div class="a" style="left:176.7px;top:74.5px;width:0.6px;height:106.1px;background:#e6e6e6;"></div><div class="a" style="left:-122.82px;width:600px;text-align:center;top:186.16px;font-size:5.6px;line-height:1;color:#7a7a7a;font-weight:normal;">6%</div><div class="a" style="left:194.7px;top:74.5px;width:0.6px;height:106.1px;background:#e6e6e6;"></div><div class="a" style="left:-104.76px;width:600px;text-align:center;top:186.16px;font-size:5.6px;line-height:1;color:#7a7a7a;font-weight:normal;">8%</div><div class="a" style="left:213.2px;top:74.5px;width:0.6px;height:106.1px;background:#e6e6e6;"></div><div class="a" style="left:-86.70px;width:600px;text-align:center;top:186.16px;font-size:5.6px;line-height:1;color:#7a7a7a;font-weight:normal;">10%</div><div class="a" style="left:231.2px;top:74.5px;width:0.6px;height:106.1px;background:#e6e6e6;"></div><div class="a" style="left:-68.64px;width:600px;text-align:center;top:186.16px;font-size:5.6px;line-height:1;color:#7a7a7a;font-weight:normal;">12%</div><div class="a" style="left:-481.70px;width:600px;text-align:right;top:78.56px;font-size:5.6px;line-height:1;color:#555;font-weight:normal;">Malicious scripts and phishing pages</div><div class="a" style="left:123px;top:78.6px;width:86.5px;height:4px;background:#14a287;"></div><div class="a" style="left:213.69px;top:78.19px;font-size:5.8px;line-height:1;color:#333;font-weight:bold;">9.6%</div><div class="a" style="left:-481.70px;width:600px;text-align:right;top:89.19px;font-size:5.6px;line-height:1;color:#555;font-weight:normal;">Denylisted internet resources</div><div class="a" style="left:123px;top:89.22999999999999px;width:78.5px;height:4px;background:#14a287;"></div><div class="a" style="left:205.56px;top:88.82px;font-size:5.8px;line-height:1;color:#333;font-weight:bold;">8.7%</div><div class="a" style="left:-481.70px;width:600px;text-align:right;top:99.82px;font-size:5.6px;line-height:1;color:#555;font-weight:normal;">Spy Trojans, backdoors and keyloggers</div><div class="a" style="left:123px;top:99.86px;width:39.5px;height:4px;background:#d9d9d9;"></div><div class="a" style="left:166.73px;top:99.45px;font-size:5.8px;line-height:1;color:#7a7a7a;font-weight:normal;">4.4%</div><div class="a" style="left:-481.70px;width:600px;text-align:right;top:110.45px;font-size:5.6px;line-height:1;color:#555;font-weight:normal;">Worms</div><div class="a" style="left:123px;top:110.49px;width:23.5px;height:4px;background:#d9d9d9;"></div><div class="a" style="left:150.48px;top:110.08px;font-size:5.8px;line-height:1;color:#7a7a7a;font-weight:normal;">2.6%</div><div class="a" style="left:-481.70px;width:600px;text-align:right;top:121.08px;font-size:5.6px;line-height:1;color:#555;font-weight:normal;">Viruses</div><div class="a" style="left:123px;top:121.12px;width:20.0px;height:4px;background:#d9d9d9;"></div><div class="a" style="left:146.87px;top:120.71px;font-size:5.8px;line-height:1;color:#7a7a7a;font-weight:normal;">2.2%</div><div class="a" style="left:-481.70px;width:600px;text-align:right;top:131.71px;font-size:5.6px;line-height:1;color:#555;font-weight:normal;">Malicious documents (MSOffice + PDF)</div><div class="a" style="left:123px;top:131.75px;width:18.0px;height:4px;background:#14a287;"></div><div class="a" style="left:145.06px;top:131.34px;font-size:5.8px;line-height:1;color:#333;font-weight:bold;">2.0%</div><div class="a" style="left:-481.70px;width:600px;text-align:right;top:142.34px;font-size:5.6px;line-height:1;color:#555;font-weight:normal;">Web miners running in browsers</div><div class="a" style="left:123px;top:142.38px;width:9.0px;height:4px;background:#d9d9d9;"></div><div class="a" style="left:136.03px;top:141.97px;font-size:5.8px;line-height:1;color:#7a7a7a;font-weight:normal;">1.0%</div><div class="a" style="left:-481.70px;width:600px;text-align:right;top:152.97px;font-size:5.6px;line-height:1;color:#555;font-weight:normal;">Miners</div><div class="a" style="left:123px;top:153.01px;width:9.0px;height:4px;background:#d9d9d9;"></div><div class="a" style="left:136.03px;top:152.60px;font-size:5.8px;line-height:1;color:#7a7a7a;font-weight:normal;">1.0%</div><div class="a" style="left:-481.70px;width:600px;text-align:right;top:163.60px;font-size:5.6px;line-height:1;color:#555;font-weight:normal;">Malware for AutoCad</div><div class="a" style="left:123px;top:163.64px;width:3.5px;height:4px;background:#d9d9d9;"></div><div class="a" style="left:130.61px;top:163.23px;font-size:5.8px;line-height:1;color:#7a7a7a;font-weight:normal;">0.4%</div><div class="a" style="left:-481.70px;width:600px;text-align:right;top:174.23px;font-size:5.6px;line-height:1;color:#555;font-weight:normal;">Ransomware</div><div class="a" style="left:123px;top:174.26999999999998px;width:3.5px;height:4px;background:#d9d9d9;"></div><div class="a" style="left:130.61px;top:173.86px;font-size:5.8px;line-height:1;color:#7a7a7a;font-weight:normal;">0.4%</div><div class="a" style="left:25.50px;top:56.89px;font-size:8.4px;line-height:1;color:#222;font-weight:bold;letter-spacing:0.036px;">Threats most often used as the initial attack vector</div><div class="a" style="left:72.80px;width:600px;text-align:center;top:189.66px;font-size:5.6px;line-height:1;color:#7a7a7a;font-weight:normal;">0%</div><div class="a" style="left:391.2px;top:74.5px;width:0.6px;height:109.5px;background:#e6e6e6;"></div><div class="a" style="left:91.70px;width:600px;text-align:center;top:189.66px;font-size:5.6px;line-height:1;color:#7a7a7a;font-weight:normal;">2%</div><div class="a" style="left:410.2px;top:74.5px;width:0.6px;height:109.5px;background:#e6e6e6;"></div><div class="a" style="left:110.60px;width:600px;text-align:center;top:189.66px;font-size:5.6px;line-height:1;color:#7a7a7a;font-weight:normal;">4%</div><div class="a" style="left:429.2px;top:74.5px;width:0.6px;height:109.5px;background:#e6e6e6;"></div><div class="a" style="left:129.50px;width:600px;text-align:center;top:189.66px;font-size:5.6px;line-height:1;color:#7a7a7a;font-weight:normal;">6%</div><div class="a" style="left:448.2px;top:74.5px;width:0.6px;height:109.5px;background:#e6e6e6;"></div><div class="a" style="left:148.40px;width:600px;text-align:center;top:189.66px;font-size:5.6px;line-height:1;color:#7a7a7a;font-weight:normal;">8%</div><div class="a" style="left:467.2px;top:74.5px;width:0.6px;height:109.5px;background:#e6e6e6;"></div><div class="a" style="left:167.30px;width:600px;text-align:center;top:189.66px;font-size:5.6px;line-height:1;color:#7a7a7a;font-weight:normal;">10%</div><div class="a" style="left:485.7px;top:74.5px;width:0.6px;height:109.5px;background:#e6e6e6;"></div><div class="a" style="left:186.20px;width:600px;text-align:center;top:189.66px;font-size:5.6px;line-height:1;color:#7a7a7a;font-weight:normal;">12%</div><div class="a" style="left:-231.90px;width:600px;text-align:right;top:78.56px;font-size:5.6px;line-height:1;color:#555;font-weight:normal;">Malicious scripts and phishing pages</div><div class="a" style="left:372.8px;top:78.6px;width:90.5px;height:4px;background:#d9d9d9;"></div><div class="a" style="left:467.52px;top:78.19px;font-size:5.8px;line-height:1;color:#7a7a7a;font-weight:normal;">9.6%</div><div class="a" style="left:-231.90px;width:600px;text-align:right;top:89.55px;font-size:5.6px;line-height:1;color:#555;font-weight:normal;">Denylisted internet resources</div><div class="a" style="left:372.8px;top:89.58999999999999px;width:82.0px;height:4px;background:#d9d9d9;"></div><div class="a" style="left:459.01px;top:89.18px;font-size:5.8px;line-height:1;color:#7a7a7a;font-weight:normal;">8.7%</div><div class="a" style="left:-231.90px;width:600px;text-align:right;top:100.54px;font-size:5.6px;line-height:1;color:#555;font-weight:normal;">Spy Trojans, backdoors and keyloggers</div><div class="a" style="left:372.8px;top:100.58px;width:41.5px;height:4px;background:#d9d9d9;"></div><div class="a" style="left:418.38px;top:100.17px;font-size:5.8px;line-height:1;color:#7a7a7a;font-weight:normal;">4.4%</div><div class="a" style="left:-231.90px;width:600px;text-align:right;top:111.53px;font-size:5.6px;line-height:1;color:#555;font-weight:normal;">Worms</div><div class="a" style="left:372.8px;top:111.57px;width:24.5px;height:4px;background:#14a287;"></div><div class="a" style="left:401.37px;top:111.16px;font-size:5.8px;line-height:1;color:#333;font-weight:bold;">2.6%</div><div class="a" style="left:-231.90px;width:600px;text-align:right;top:122.52px;font-size:5.6px;line-height:1;color:#555;font-weight:normal;">Viruses</div><div class="a" style="left:372.8px;top:122.56px;width:21.0px;height:4px;background:#14a287;"></div><div class="a" style="left:397.59px;top:122.15px;font-size:5.8px;line-height:1;color:#333;font-weight:bold;">2.2%</div><div class="a" style="left:-231.90px;width:600px;text-align:right;top:133.51px;font-size:5.6px;line-height:1;color:#555;font-weight:normal;">Malicious documents (MSOffice + PDF)</div><div class="a" style="left:372.8px;top:133.55px;width:19.0px;height:4px;background:#d9d9d9;"></div><div class="a" style="left:395.70px;top:133.14px;font-size:5.8px;line-height:1;color:#7a7a7a;font-weight:normal;">2.0%</div><div class="a" style="left:-231.90px;width:600px;text-align:right;top:144.50px;font-size:5.6px;line-height:1;color:#555;font-weight:normal;">Web miners running in browsers</div><div class="a" style="left:372.8px;top:144.54px;width:9.5px;height:4px;background:#14a287;"></div><div class="a" style="left:386.25px;top:144.13px;font-size:5.8px;line-height:1;color:#333;font-weight:bold;">1.0%</div><div class="a" style="left:-231.90px;width:600px;text-align:right;top:155.49px;font-size:5.6px;line-height:1;color:#555;font-weight:normal;">Miners</div><div class="a" style="left:372.8px;top:155.53px;width:9.5px;height:4px;background:#14a287;"></div><div class="a" style="left:386.25px;top:155.12px;font-size:5.8px;line-height:1;color:#333;font-weight:bold;">1.0%</div><div class="a" style="left:-231.90px;width:600px;text-align:right;top:166.48px;font-size:5.6px;line-height:1;color:#555;font-weight:normal;">Malware for AutoCad</div><div class="a" style="left:372.8px;top:166.51999999999998px;width:4.0px;height:4px;background:#14a287;"></div><div class="a" style="left:380.58px;top:166.11px;font-size:5.8px;line-height:1;color:#333;font-weight:bold;">0.4%</div><div class="a" style="left:-231.90px;width:600px;text-align:right;top:177.47px;font-size:5.6px;line-height:1;color:#555;font-weight:normal;">Ransomware</div><div class="a" style="left:372.8px;top:177.51px;width:4.0px;height:4px;background:#d9d9d9;"></div><div class="a" style="left:380.58px;top:177.10px;font-size:5.8px;line-height:1;color:#7a7a7a;font-weight:normal;">0.4%</div><div class="a" style="left:81.30px;width:600px;text-align:center;top:56.49px;font-size:8.4px;line-height:1;color:#222;font-weight:bold;letter-spacing:0.105px;">Self-propagating threats</div><div class="a" style="left:14px;top:209.7px;width:23px;height:0.8px;background:#555;"></div><div class="a" style="left:14.20px;top:212.57px;font-size:7.0px;line-height:1;color:#444;font-weight:normal;letter-spacing:-0.025px;">Percentage of ICS computers on which malware</div><div class="a" style="left:14.20px;top:221.07px;font-size:7.0px;line-height:1;color:#444;font-weight:normal;letter-spacing:0.053px;">from different categories was blocked in the country, H2 2022</div><div class="a" style="left:273px;top:209.7px;width:23px;height:0.8px;background:#555;"></div><div class="a" style="left:273.00px;top:212.57px;font-size:7.0px;line-height:1;color:#444;font-weight:normal;letter-spacing:-0.025px;">Percentage of ICS computers on which malware</div><div class="a" style="left:273.00px;top:221.07px;font-size:7.0px;line-height:1;color:#444;font-weight:normal;letter-spacing:0.053px;">from different categories was blocked in the country, H2 2022</div><div class="a" style="left:8.6px;top:240.5px;width:366.4px;height:41.2px;border:6px solid #40b49c;border-radius:7px"></div><div class="a" style="left:14px;top:21px;width:45px;height:4px;background:#333;"></div><div class="a" style="left:273px;top:209.7px;width:23px;height:3px;background:#555;"></div><div class="a" style="left:14px;top:209.7px;width:23px;height:3px;background:#555;"></div><div class="a" style="left:26.70px;top:244.40px;font-size:9.8px;line-height:1;color:#333;font-weight:normal;letter-spacing:-0.016px;">Overall, the security measures in place were not sufficient to block</div><div class="a" style="left:26.70px;top:255.90px;font-size:9.8px;line-height:1;color:#333;font-weight:normal;letter-spacing:0.099px;">these threats before they reached network hosts</div><div class="a" style="left:26.70px;top:267.10px;font-size:9.8px;line-height:1;color:#333;font-weight:normal;letter-spacing:0.095px;">(where these threats were ultimately detected by endpoint protection)</div><div class="a" style="left:448.00px;top:252.30px;font-size:8.5px;line-height:1;color:#222;font-weight:bold;letter-spacing:0.050px;">Kaspersky</div><div class="a" style="left:448.00px;top:261.60px;font-size:8.5px;line-height:1;color:#222;font-weight:bold;letter-spacing:0.047px;">ICS CERT</div></div></div>
<div class="a" style="left:-584.00px;width:600px;text-align:right;top:406.15px;font-size:11.4px;line-height:1;color:#c8503a;font-weight:normal;">13</div>
<div class="a" style="left:21.2px;top:461.3px;width:68px;height:39px;background:#d4d4d4"></div>
<div class="a" style="left:21.7px;top:461.8px;width:67px;height:38px;overflow:hidden;background:#fff"><div style="position:absolute;left:0;top:0;width:507px;height:285px;transform:scale(0.13215);transform-origin:0 0"><div class="a" style="left:0px;top:0px;width:507px;height:285px;background:#fff;"></div><div class="a" style="left:14px;top:22.6px;width:28px;height:1.3px;background:#222;"></div><div class="a" style="left:14px;top:29px;width:40px;height:9px;background:#555;"></div><div class="a" style="left:56px;top:31px;width:120px;height:6px;background:#a8a8a8;"></div><div class="a" style="left:16px;top:68px;width:4px;height:4px;background:#e88;"></div><div class="a" style="left:28px;top:68px;width:140px;height:4px;background:#888;"></div><div class="a" style="left:16px;top:82px;width:4px;height:4px;background:#e88;"></div><div class="a" style="left:28px;top:82px;width:140px;height:4px;background:#888;"></div><div class="a" style="left:28px;top:90px;width:120px;height:4px;background:#b5b5b5;"></div><div class="a" style="left:28px;top:98px;width:140px;height:4px;background:#b5b5b5;"></div><div class="a" style="left:16px;top:120px;width:4px;height:4px;background:#e88;"></div><div class="a" style="left:28px;top:120px;width:140px;height:4px;background:#888;"></div><div class="a" style="left:28px;top:128px;width:120px;height:4px;background:#b5b5b5;"></div><div class="a" style="left:28px;top:136px;width:140px;height:4px;background:#b5b5b5;"></div><div class="a" style="left:28px;top:144px;width:120px;height:4px;background:#b5b5b5;"></div><div class="a" style="left:16px;top:170px;width:4px;height:4px;background:#e88;"></div><div class="a" style="left:28px;top:170px;width:140px;height:4px;background:#888;"></div><div class="a" style="left:28px;top:178px;width:120px;height:4px;background:#b5b5b5;"></div><div class="a" style="left:330px;top:68px;width:0.8px;height:105px;background:#e6e6e6;"></div><div class="a" style="left:354px;top:68px;width:0.8px;height:105px;background:#e6e6e6;"></div><div class="a" style="left:378px;top:68px;width:0.8px;height:105px;background:#e6e6e6;"></div><div class="a" style="left:402px;top:68px;width:0.8px;height:105px;background:#e6e6e6;"></div><div class="a" style="left:426px;top:68px;width:0.8px;height:105px;background:#e6e6e6;"></div><div class="a" style="left:450px;top:68px;width:0.8px;height:105px;background:#e6e6e6;"></div><div class="a" style="left:474px;top:68px;width:0.8px;height:105px;background:#e6e6e6;"></div><div class="a" style="left:498px;top:68px;width:0.8px;height:105px;background:#e6e6e6;"></div><div class="a" style="left:200px;top:68px;width:290px;height:0.8px;background:#e6e6e6;"></div><div class="a" style="left:210px;top:80px;width:120px;height:3px;background:#d5d5d5;"></div><div class="a" style="left:330px;top:79px;width:150px;height:5px;background:#cfcfcf;"></div><div class="a" style="left:210px;top:92px;width:120px;height:3px;background:#d5d5d5;"></div><div class="a" style="left:330px;top:91px;width:90px;height:5px;background:#6fcfbd;"></div><div class="a" style="left:210px;top:104px;width:120px;height:3px;background:#d5d5d5;"></div><div class="a" style="left:330px;top:103px;width:40px;height:5px;background:#d8d8d8;"></div><div class="a" style="left:210px;top:116px;width:120px;height:3px;background:#d5d5d5;"></div><div class="a" style="left:330px;top:115px;width:30px;height:5px;background:#d0d0d0;"></div><div class="a" style="left:210px;top:128px;width:120px;height:3px;background:#d5d5d5;"></div><div class="a" style="left:330px;top:127px;width:35px;height:5px;background:#cfcfcf;"></div><div class="a" style="left:210px;top:140px;width:120px;height:3px;background:#d5d5d5;"></div><div class="a" style="left:330px;top:139px;width:20px;height:5px;background:#d8d8d8;"></div><div class="a" style="left:210px;top:152px;width:120px;height:3px;background:#d5d5d5;"></div><div class="a" style="left:330px;top:151px;width:15px;height:5px;background:#8fd9c9;"></div><div class="a" style="left:210px;top:164px;width:120px;height:3px;background:#d5d5d5;"></div><div class="a" style="left:330px;top:163px;width:10px;height:5px;background:#d8d8d8;"></div><svg class="a" style="left:300px;top:80px" width="200" height="110"><path d="M195 5 L40 100" fill="none" stroke="#e83030" stroke-width="3.5"/><path d="M32 106 l14-4 l-7-8z" fill="#e83030"/></svg><div class="a" style="left:280px;top:198px;width:60px;height:9px;background:#666;"></div><div class="a" style="left:340px;top:200px;width:110px;height:5px;background:#aaa;"></div><div class="a" style="left:8.6px;top:240.5px;width:366.4px;height:41.2px;border:6px solid #52bba5;border-radius:9px"></div><div class="a" style="left:27px;top:258px;width:320px;height:6px;background:#b0b0b0;"></div><div class="a" style="left:448px;top:253px;width:44px;height:7px;background:#666;"></div><div class="a" style="left:448px;top:262px;width:40px;height:7px;background:#666;"></div><div class="a" style="left:485px;top:34px;width:5px;height:5px;background:#777;"></div></div></div>
<div class="a" style="left:-584.00px;width:600px;text-align:right;top:460.55px;font-size:11.4px;line-height:1;color:#555;font-weight:normal;">14</div>
<div class="a" style="left:20.2px;top:405.9px;width:69.6px;height:40.9px;border:2px solid #e8714f"></div>
<svg class="a" style="left:2px;top:296px" width="16" height="14"><path d="M1 1 L15 13" stroke="#555" stroke-width="0.8"/></svg>
<div class="a" style="left:21.7px;top:115.8px;width:67px;height:2.5px;background:linear-gradient(90deg,#5fc2b3,#78d9c0 60%,#90e5c8)"></div>
<div class="a" style="left:21.2px;top:118.3px;width:68px;height:0.8px;background:#d4d4d4;"></div>
<div class="a" style="left:0px;top:520px;width:1024px;height:18px;background:#f1f1f1;"></div>
<div class="a" style="left:0px;top:520px;width:1024px;height:1px;background:#dcdcdc;"></div>
<div class="a" style="left:4.30px;top:525.09px;font-size:8.4px;line-height:1;color:#505050;font-weight:normal;letter-spacing:-0.032px;">Slide 13 of 14</div>
<svg class="a" style="left:66px;top:524px;" width="12" height="10" viewBox="0 0 12 10"><path d="M0.5 0.5h4.5l1 1v8h-5.5z" fill="none" stroke="#777" stroke-width="0.8"/><path d="M6 1.5l1-1h4.5v9H6" fill="none" stroke="#777" stroke-width="0.8"/><path d="M7 7l3-4.5l0.9 0.6l-3 4.5l-1.2 0.5z" fill="#777"/></svg>
<div class="a" style="left:86.80px;top:525.09px;font-size:8.4px;line-height:1;color:#505050;font-weight:normal;letter-spacing:-0.117px;">English (India)</div>
<svg class="a" style="left:667px;top:524px;" width="9" height="10" viewBox="0 0 9 10"><path d="M4.5 0.3l2.2 2.2h-4.4z" fill="#777"/><path d="M0 4.5h9M0 6.6h9M0 8.7h9" stroke="#888" stroke-width="0.8"/></svg>
<div class="a" style="left:679.70px;top:525.09px;font-size:8.4px;line-height:1;color:#505050;font-weight:normal;letter-spacing:-0.145px;">Notes</div>
<svg class="a" style="left:712.5px;top:523.5px;" width="11" height="11" viewBox="0 0 11 11"><path d="M0.5 0.5h10v7h-5.5l-3 3v-3h-1.5z" fill="#6a6a6a"/></svg>
<div class="a" style="left:725.80px;top:525.09px;font-size:8.4px;line-height:1;color:#505050;font-weight:normal;letter-spacing:-0.041px;">Comments</div>
<div class="a" style="left:778.3px;top:520.4px;width:23.7px;height:16.6px;background:#c8c8c8;"></div>
<svg class="a" style="left:785px;top:523.5px;" width="11" height="11" viewBox="0 0 11 11"><rect x="0.5" y="0.5" width="10" height="10" fill="none" stroke="#6a6a6a" stroke-width="0.9"/><path d="M2.5 0.5v10M2.5 8.5h8" stroke="#6a6a6a" stroke-width="0.8"/><rect x="5" y="3.5" width="3" height="2.5" fill="none" stroke="#6a6a6a" stroke-width="0.7"/></svg>
<svg class="a" style="left:809px;top:523.5px;" width="11" height="11" viewBox="0 0 11 11"><rect x="0.5" y="0.5" width="4.5" height="4" fill="none" stroke="#777" stroke-width="0.9"/><rect x="6" y="0.5" width="4.5" height="4" fill="none" stroke="#777" stroke-width="0.9"/><rect x="0.5" y="6" width="4.5" height="4" fill="none" stroke="#777" stroke-width="0.9"/><rect x="6" y="6" width="4.5" height="4" fill="none" stroke="#777" stroke-width="0.9"/></svg>
<svg class="a" style="left:833px;top:523.5px;" width="11" height="11" viewBox="0 0 11 11"><path d="M0.5 0.5h4.5v10H0.5zM6 0.5h4.5v10H6z" fill="none" stroke="#888" stroke-width="0.9"/><path d="M1.5 3h2.5M1.5 5h2.5M1.5 7h2.5M7 3h2.5M7 5h2.5M7 7h2.5" stroke="#aaa" stroke-width="0.6"/></svg>
<svg class="a" style="left:857px;top:523px;" width="11" height="12" viewBox="0 0 11 12"><path d="M0 0.6h11" stroke="#777" stroke-width="1"/><rect x="1" y="1.5" width="9" height="5.5" fill="none" stroke="#777" stroke-width="0.9"/><path d="M3 3.5h5" stroke="#999" stroke-width="0.6"/><path d="M5.5 7v2.5M3.5 11l2-1.5l2 1.5" fill="none" stroke="#777" stroke-width="0.8"/></svg>
<div class="a" style="left:877px;top:528.5px;width:6px;height:1.3px;background:#555;"></div>
<div class="a" style="left:886px;top:528.8px;width:80px;height:0.8px;background:#c6c6c6;"></div>
<div class="a" style="left:926px;top:526.5px;width:1px;height:4px;background:#c6c6c6;"></div>
<div class="a" style="left:910px;top:524.5px;width:3px;height:9px;background:#555;"></div>
<svg class="a" style="left:969px;top:525px;" width="8" height="8" viewBox="0 0 8 8"><path d="M0 4h7.5M3.75 0.2v7.6" stroke="#555" stroke-width="1.4"/></svg>
<div class="a" style="left:984.70px;top:525.09px;font-size:8.4px;line-height:1;color:#505050;font-weight:normal;letter-spacing:-0.331px;">66%</div>
<svg class="a" style="left:1009.5px;top:523.5px;" width="11" height="11" viewBox="0 0 11 11"><rect x="0.5" y="0.5" width="9.5" height="9.5" fill="none" stroke="#888" stroke-width="0.9"/><path d="M2 2l2.2 2.2M8.5 2l-2.2 2.2M2 8.5l2.2-2.2M8.5 8.5l-2.2-2.2" stroke="#777" stroke-width="0.9"/></svg>
<div class="a" style="left:0;top:537.5px;width:1024px;height:38.5px;background:linear-gradient(90deg,#fde3d3 0%,#fce3d6 30%,#f8e2e0 65%,#f8e1de 85%,#fae3d8 100%)"></div>
<div class="a" style="left:0px;top:537.5px;width:1024px;height:0.8px;background:#f5e6e0;"></div>
<svg class="a" style="left:15px;top:548px;" width="21" height="18" viewBox="0 0 21 18"><defs><linearGradient id="sun" x1="0" y1="0" x2="0" y2="1"><stop offset="0" stop-color="#f7bd2c"/><stop offset="1" stop-color="#e9620f"/></linearGradient><linearGradient id="cld" x1="0" y1="0" x2="0" y2="1"><stop offset="0" stop-color="#e2eaf3"/><stop offset="1" stop-color="#b8c8db"/></linearGradient></defs><circle cx="10.4" cy="9.3" r="7.5" fill="url(#sun)"/><g fill="url(#cld)"><circle cx="9.6" cy="7.8" r="4.6"/><circle cx="15.4" cy="9.6" r="3.7"/><circle cx="4.6" cy="10.9" r="3.2"/><rect x="1.3" y="10" width="18.9" height="4.6" rx="2.3"/></g></svg>
<div class="a" style="left:41.20px;top:547.11px;font-size:9.2px;line-height:1;color:#222;font-weight:normal;-webkit-text-stroke:0.1px #222;letter-spacing:-0.243px;">33°C</div>
<div class="a" style="left:41.20px;top:559.58px;font-size:9px;line-height:1;color:#555;font-weight:normal;letter-spacing:0.197px;">Smoke</div>
<svg class="a" style="left:337.4px;top:548.2px;" width="19" height="19" viewBox="0 0 19 19"><defs><linearGradient id="wg" x1="0" y1="0" x2="1" y2="1"><stop offset="0" stop-color="#3ccdf8"/><stop offset="1" stop-color="#1a78d4"/></linearGradient></defs><rect x="0" y="0" width="8.8" height="8.8" rx="0.8" fill="url(#wg)"/><rect x="9.8" y="0" width="8.8" height="8.8" rx="0.8" fill="url(#wg)"/><rect x="0" y="9.8" width="8.8" height="8.8" rx="0.8" fill="url(#wg)"/><rect x="9.8" y="9.8" width="8.8" height="8.8" rx="0.8" fill="url(#wg)"/></svg>
<div class="a" style="left:368.6px;top:545.8px;width:77.4px;height:22.8px;border-radius:11.4px;background:#fdf4f0;border:0.8px solid #eedcd6"></div>
<svg class="a" style="left:385.5px;top:552.3px;" width="11" height="11" viewBox="0 0 11 11"><circle cx="6.5" cy="4.2" r="3.5" fill="none" stroke="#333" stroke-width="1.2"/><path d="M4 6.8L0.8 10" stroke="#333" stroke-width="1.4"/></svg>
<div class="a" style="left:400.50px;top:553.01px;font-size:9.2px;line-height:1;color:#333;font-weight:normal;letter-spacing:-0.142px;">Search</div>
<svg class="a" style="left:457.5px;top:548px;" width="20" height="19" viewBox="0 0 20 19"><rect x="6" y="0.5" width="13" height="12" rx="1.5" fill="#e8e8e8" stroke="#cfcfcf" stroke-width="0.6"/><rect x="0.5" y="5.5" width="13" height="13" rx="1.5" fill="#2a2a2a"/><rect x="6" y="5.5" width="7.5" height="7" fill="#b0b0b0"/></svg>
<svg class="a" style="left:492.5px;top:548px;" width="19" height="19" viewBox="0 0 19 19"><defs><linearGradient id="tg" x1="0" y1="0" x2="1" y2="1"><stop offset="0" stop-color="#8d7ce0"/><stop offset="1" stop-color="#5a4bc4"/></linearGradient></defs><path d="M9.5 0.5a8.5 8.5 0 1 1 -4.5 15.7l-4.3 2.3l1.3-4.5a8.5 8.5 0 0 1 7.5-13.5z" fill="url(#tg)"/><rect x="4.5" y="6" width="7" height="6.5" rx="1.3" fill="#fff"/><path d="M12 8.5l3-2v6l-3-2z" fill="#fff"/></svg>
<svg class="a" style="left:527.8px;top:548px;" width="19" height="19" viewBox="0 0 19 19"><path d="M6 3.5v-1.5a1.5 1.5 0 0 1 1.5-1.5h4a1.5 1.5 0 0 1 1.5 1.5v1.5" fill="none" stroke="#4aa3e6" stroke-width="1"/><rect x="0.5" y="3" width="18" height="15.5" rx="2" fill="#1b4f9a"/><rect x="5" y="7" width="4" height="4" fill="#f35325"/><rect x="10" y="7" width="4" height="4" fill="#81bc06"/><rect x="5" y="12" width="4" height="4" fill="#05a6f0"/><rect x="10" y="12" width="4" height="4" fill="#ffba08"/></svg>
<svg class="a" style="left:563px;top:547.6px;" width="20" height="20" viewBox="0 0 20 20"><defs><linearGradient id="eg1" x1="0" y1="0" x2="1" y2="0.6"><stop offset="0" stop-color="#27a9ec"/><stop offset="0.5" stop-color="#2ec3c0"/><stop offset="1" stop-color="#56e25a"/></linearGradient><linearGradient id="eg2" x1="0" y1="0" x2="0.8" y2="1"><stop offset="0" stop-color="#1e8ae0"/><stop offset="1" stop-color="#0a4f9e"/></linearGradient></defs><circle cx="10" cy="9.8" r="9.6" fill="url(#eg1)"/><path d="M0.4 10C0.6 6 4 3.6 8 4.2C5 5.2 4.6 9 6.5 12.2C8.5 15.5 13 16.8 18.5 14.3C16.8 17.6 13.6 19.6 10 19.6C4.7 19.6 0.4 15.3 0.4 10Z" fill="url(#eg2)"/><path d="M7.3 10.5C8 13.8 12.5 15.2 18.8 13.9L20.5 13.3V11.3C17 13 13.2 13.3 11.3 11.8Z" fill="#f9e2df"/><circle cx="9.7" cy="10.7" r="2.4" fill="#f9e2df"/></svg>
<svg class="a" style="left:598px;top:549px;" width="20" height="18" viewBox="0 0 20 18"><path d="M0.5 1.5a1 1 0 0 1 1-1h5.5l2 2h9.5a1 1 0 0 1 1 1v13a1 1 0 0 1-1 1h-17a1 1 0 0 1-1-1z" fill="#e8b230"/><rect x="0.5" y="4" width="19" height="13.5" rx="1" fill="#fcd55a"/><rect x="4" y="12" width="12" height="5.5" rx="1" fill="#1f7ad6"/><rect x="5.5" y="13.3" width="9" height="1.3" fill="#9bd0ff"/></svg>
<div class="a" style="left:606px;top:570.5px;width:4.5px;height:2px;border-radius:1px;background:#777"></div>
<div class="a" style="left:628px;top:542.4px;width:27.5px;height:30px;border-radius:3px;background:#fbefec;border:0.8px solid #eddcd7"></div>
<svg class="a" style="left:634px;top:548px;" width="19" height="18" viewBox="0 0 19 18"><rect x="6" y="2" width="12.5" height="14" rx="1" fill="#fff" stroke="#c94a2a" stroke-width="0.8"/><path d="M10 5h6M10 8h6M10 11h6" stroke="#d9705a" stroke-width="0.9"/><circle cx="13" cy="7" r="2.3" fill="none" stroke="#d35230" stroke-width="1.2"/><path d="M0 2.5l10.5-2.3v17.6l-10.5-2.3z" fill="#d14424"/><text x="2" y="12.5" font-family="Liberation Sans" font-weight="bold" font-size="9" fill="#fff">P</text></svg>
<div class="a" style="left:637px;top:570.3px;width:12.5px;height:2.2px;border-radius:1.1px;background:#0a6ed1"></div>
<svg class="a" style="left:668.5px;top:548px;" width="20" height="19" viewBox="0 0 20 19"><circle cx="9.5" cy="9.5" r="9.3" fill="#db4437"/><path d="M9.5 9.5L1.5 14.2A9.3 9.3 0 0 0 9.5 18.8z" fill="#0f9d58"/><path d="M9.5 9.5L1.2 14a9.3 9.3 0 0 0 8.3 4.8l4.5-9.3z" fill="#0f9d58"/><path d="M18.8 9.5a9.3 9.3 0 0 1 -9.3 9.3l4.4-7.6l-0.2-5.9h4.2a9.3 9.3 0 0 1 0.9 4.2z" fill="#ffcd40"/><circle cx="9.5" cy="9.5" r="4.2" fill="#fff"/><circle cx="9.5" cy="9.5" r="3.3" fill="#1a73e8"/></svg>
<svg class="a" style="left:679.5px;top:544px;" width="12.5" height="12.5" viewBox="0 0 12.5 12.5"><circle cx="6.2" cy="6.2" r="6" fill="#e8710a"/><text x="3.2" y="9.2" font-family="Liberation Sans" font-size="8" fill="#fff">S</text></svg>
<div class="a" style="left:676px;top:570.5px;width:4.5px;height:2px;border-radius:1px;background:#777"></div>
<svg class="a" style="left:822px;top:553.7px;" width="10.5" height="6" viewBox="0 0 10.5 6"><path d="M0.5 5.5l4.7-4.7l4.7 4.7" fill="none" stroke="#333" stroke-width="0.9"/></svg>
<div class="a" style="left:845.50px;top:547.52px;font-size:8.6px;line-height:1;color:#333;font-weight:normal;letter-spacing:-0.111px;">ENG</div>
<div class="a" style="left:849.70px;top:559.42px;font-size:8.6px;line-height:1;color:#333;font-weight:normal;letter-spacing:0.806px;">IN</div>
<svg class="a" style="left:878.5px;top:552px;" width="13" height="9" viewBox="0 0 13 9"><path d="M0.6 3.2a8.5 8.5 0 0 1 11.8 0M2.6 5.2a5.5 5.5 0 0 1 7.8 0M4.5 7.1a2.8 2.8 0 0 1 4 0" fill="none" stroke="#222" stroke-width="1"/><circle cx="6.5" cy="8.3" r="0.8" fill="#222"/></svg>
<svg class="a" style="left:897.5px;top:551px;" width="13" height="10.5" viewBox="0 0 13 10.5"><path d="M0.5 3.5h2.5l3-3v9.5l-3-3H0.5z" fill="none" stroke="#222" stroke-width="0.9"/><path d="M7.8 3a3 3 0 0 1 0 4.5M9.5 1.5a5.3 5.3 0 0 1 0 7.5M11.2 0.3a7.2 7.2 0 0 1 0 10" fill="none" stroke="#222" stroke-width="0.9"/></svg>
<svg class="a" style="left:917px;top:553.8px;" width="13" height="7" viewBox="0 0 13 7"><rect x="0.5" y="0.5" width="10.5" height="6" rx="1" fill="none" stroke="#222" stroke-width="0.9"/><rect x="2" y="2" width="7.5" height="3" fill="#222"/><rect x="11.5" y="2.2" width="1.2" height="2.6" fill="#222"/></svg>
<div class="a" style="left:969.90px;top:547.52px;font-size:8.6px;line-height:1;color:#222;font-weight:normal;letter-spacing:-0.367px;">11:27</div>
<div class="a" style="left:941.20px;top:559.42px;font-size:8.6px;line-height:1;color:#222;font-weight:normal;letter-spacing:0.460px;">14-03-2023</div>
<div class="a" style="left:993.9px;top:549.2px;width:16.4px;height:13.6px;border-radius:6.8px;background:#0b6dcc"></div>
<div class="a" style="left:702.10px;width:600px;text-align:center;top:552.09px;font-size:8.4px;line-height:1;color:#fff;font-weight:normal;">20</div>
</body></html>
